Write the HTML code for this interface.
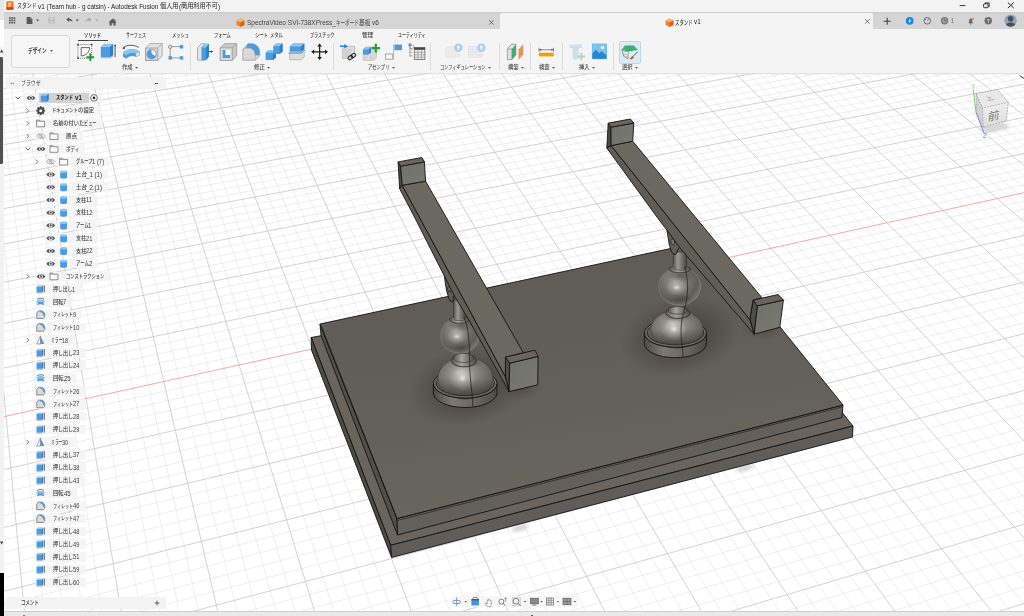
<!DOCTYPE html>
<html lang="ja"><head><meta charset="utf-8"><title>スタンド v1 - Autodesk Fusion</title>
<style>
html,body{margin:0;padding:0;background:#fff;}
body{width:1024px;height:616px;overflow:hidden;position:relative;font-family:"Liberation Sans","Noto Sans CJK JP",sans-serif;}
#app{position:absolute;left:0;top:0;width:1024px;height:616px;overflow:hidden;background:#fff;}
#vp{position:absolute;left:0;top:0;}
.t{position:absolute;white-space:nowrap;line-height:1;transform-origin:0 50%;display:block;}
.a{position:absolute;}
</style></head><body><div id="app">
<svg id="vp" width="1024" height="616" viewBox="0 0 1024 616">
<g shape-rendering="auto"><path d="M-371.6 -8.7L-998.0 1726.3M-360.6 -10.2L-957.3 1710.3M-338.6 -13.0L-877.3 1679.0M-327.6 -14.4L-838.1 1663.6M-316.7 -15.9L-799.4 1648.4M-305.9 -17.3L-761.1 1633.4M-284.3 -20.1L-686.1 1603.9M-273.6 -21.5L-649.2 1589.5M-262.9 -22.9L-612.8 1575.2M-252.2 -24.2L-576.9 1561.1M-231.0 -27.0L-506.3 1533.4M-220.5 -28.4L-471.6 1519.8M-210.0 -29.7L-437.4 1506.3M-199.6 -31.1L-403.5 1493.1M-178.8 -33.8L-337.0 1467.0M-168.5 -35.1L-304.3 1454.1M-158.2 -36.5L-272.0 1441.5M-147.9 -37.8L-240.1 1428.9M-127.5 -40.5L-177.3 1404.3M-117.4 -41.8L-146.4 1392.2M-107.3 -43.1L-115.9 1380.2M-97.2 -44.4L-85.7 1368.4M-77.2 -47.0L-26.3 1345.1M-67.3 -48.3L2.9 1333.6M-57.4 -49.6L31.7 1322.3M-47.5 -50.9L60.3 1311.1M-27.8 -53.4L116.5 1289.0M-18.1 -54.7L144.2 1278.2M-8.3 -56.0L171.5 1267.4M1.4 -57.2L198.6 1256.8M20.6 -59.7L251.9 1235.9M30.2 -61.0L278.1 1225.6M39.8 -62.2L304.1 1215.4M49.3 -63.5L329.8 1205.3M68.3 -65.9L380.4 1185.5M77.7 -67.2L405.3 1175.7M87.1 -68.4L430.0 1166.0M96.4 -69.6L454.4 1156.4M115.0 -72.0L502.5 1137.6M124.3 -73.2L526.2 1128.3M133.5 -74.4L549.7 1119.1M142.7 -75.6L573.0 1109.9M161.0 -78.0L618.8 1092.0M170.1 -79.2L641.3 1083.1M179.1 -80.4L663.7 1074.3M188.1 -81.5L685.8 1065.6M206.1 -83.9L729.5 1048.5M215.0 -85.0L751.0 1040.1M223.9 -86.2L772.3 1031.7M232.8 -87.3L793.5 1023.4M250.4 -89.6L835.1 1007.1M259.2 -90.8L855.7 999.0M268.0 -91.9L876.0 991.0M276.7 -93.0L896.2 983.1M294.0 -95.3L936.0 967.5M302.7 -96.4L955.6 959.8M311.3 -97.5L975.1 952.2M319.8 -98.7L994.3 944.6M336.9 -100.9L1032.4 929.7M345.3 -102.0L1051.2 922.3M353.8 -103.1L1069.8 915.0M362.2 -104.2L1088.2 907.8M379.0 -106.4L1124.6 893.5M387.3 -107.4L1142.6 886.4M395.6 -108.5L1160.4 879.4M403.9 -109.6L1178.1 872.5M420.4 -111.7L1213.0 858.8M428.6 -112.8L1230.2 852.1M436.8 -113.9L1247.3 845.4M444.9 -114.9L1264.2 838.7M461.1 -117.0L1297.7 825.6M469.2 -118.1L1314.2 819.1M477.2 -119.1L1330.6 812.7M485.2 -120.2L1346.8 806.3M501.1 -122.2L1378.9 793.7M509.1 -123.3L1394.8 787.5M517.0 -124.3L1410.5 781.3M524.8 -125.3L1426.1 775.2M540.5 -127.4L1457.0 763.1M548.3 -128.4L1472.2 757.1M556.1 -129.4L1487.3 751.2M563.8 -130.4L1502.3 745.3M579.3 -132.4L1532.0 733.7M586.9 -133.4L1546.6 727.9M594.6 -134.4L1561.2 722.2M602.2 -135.4L1575.6 716.6M617.4 -137.4L1604.1 705.4M624.9 -138.3L1618.2 699.8M632.5 -139.3L1632.2 694.3M640.0 -140.3L1646.1 688.9M654.9 -142.2L1673.5 678.1M662.3 -143.2L1687.1 672.8M669.7 -144.2L1700.6 667.5M677.1 -145.1L1713.9 662.3M691.8 -147.0L1740.4 651.9M699.1 -148.0L1753.5 646.8M706.4 -148.9L1766.4 641.7M713.7 -149.9L1779.3 636.6M728.1 -151.8L1804.8 626.6M735.3 -152.7L1817.4 621.7M742.5 -153.6L1830.0 616.7M749.7 -154.6L1842.4 611.9M763.9 -156.4L1867.0 602.2M771.0 -157.3L1879.2 597.4M778.1 -158.3L1891.2 592.7M785.1 -159.2L1903.2 588.0M799.1 -161.0L1927.0 578.7M806.1 -161.9L1938.7 574.1M813.1 -162.8L1950.4 569.5M820.0 -163.7L1962.0 564.9M833.8 -165.5L1984.9 555.9M840.7 -166.4L1996.3 551.5M847.5 -167.3L2007.5 547.1M854.3 -168.2L2018.7 542.7M867.9 -170.0L2040.9 534.0M874.7 -170.8L2051.9 529.7M881.4 -171.7L2062.8 525.4M888.2 -172.6L2073.6 521.2M901.6 -174.3L2095.0 512.7M908.2 -175.2L2105.6 508.6M914.9 -176.1L2116.2 504.4M921.5 -176.9L2126.7 500.3M934.7 -178.6L2147.4 492.2M-363.2 -10.7L927.5 -178.4M-364.7 -6.7L931.8 -176.0M-366.1 -2.6L936.2 -173.6M-367.5 1.5L940.6 -171.1M-370.5 9.9L949.4 -166.2M-371.9 14.1L953.9 -163.7M-373.5 18.4L958.5 -161.1M-375.0 22.8L963.0 -158.6M-378.1 31.6L972.3 -153.4M-379.6 36.1L977.0 -150.8M-381.2 40.6L981.7 -148.2M-382.9 45.2L986.5 -145.5M-386.1 54.6L996.2 -140.1M-387.8 59.4L1001.1 -137.4M-389.5 64.2L1006.0 -134.6M-391.2 69.0L1011.0 -131.9M-394.7 79.0L1021.1 -126.2M-396.5 84.0L1026.3 -123.4M-398.3 89.1L1031.4 -120.5M-400.1 94.3L1036.6 -117.6M-403.8 104.9L1047.2 -111.7M-405.7 110.3L1052.6 -108.7M-407.6 115.7L1058.0 -105.7M-409.5 121.2L1063.5 -102.6M-413.4 132.4L1074.6 -96.4M-415.5 138.2L1080.2 -93.3M-417.5 144.0L1085.9 -90.1M-419.5 149.9L1091.6 -86.9M-423.8 161.8L1103.3 -80.4M-425.9 168.0L1109.2 -77.1M-428.1 174.2L1115.2 -73.8M-430.3 180.4L1121.2 -70.5M-434.8 193.3L1133.4 -63.6M-437.1 199.8L1139.6 -60.2M-439.4 206.4L1145.9 -56.7M-441.8 213.2L1152.2 -53.2M-446.6 226.9L1165.1 -46.0M-449.0 233.9L1171.6 -42.4M-451.5 241.1L1178.2 -38.7M-454.1 248.3L1184.9 -35.0M-459.2 263.1L1198.4 -27.4M-461.9 270.6L1205.3 -23.6M-464.6 278.3L1212.3 -19.7M-467.3 286.1L1219.3 -15.8M-472.9 302.0L1233.6 -7.8M-475.8 310.1L1240.8 -3.8M-478.7 318.4L1248.1 0.3M-481.6 326.8L1255.6 4.4M-487.6 344.0L1270.6 12.8M-490.7 352.8L1278.3 17.1M-493.9 361.7L1286.1 21.4M-497.0 370.8L1293.9 25.8M-503.6 389.5L1309.8 34.7M-506.9 399.0L1317.9 39.2M-510.3 408.7L1326.2 43.8M-513.8 418.6L1334.5 48.4M-520.9 438.9L1351.3 57.8M-524.6 449.3L1359.9 62.6M-528.3 459.9L1368.6 67.4M-532.1 470.7L1377.4 72.3M-539.8 492.8L1395.4 82.3M-543.8 504.2L1404.5 87.4M-547.9 515.8L1413.7 92.6M-552.0 527.6L1423.1 97.8M-560.5 551.8L1442.1 108.4M-564.9 564.3L1451.8 113.8M-569.4 577.0L1461.7 119.3M-573.9 590.0L1471.6 124.8M-583.3 616.7L1491.9 136.1M-588.1 630.5L1502.2 141.9M-593.0 644.5L1512.7 147.7M-598.0 658.8L1523.3 153.6M-608.4 688.4L1545.0 165.7M-613.8 703.6L1556.0 171.9M-619.2 719.2L1567.2 178.1M-624.8 735.1L1578.6 184.4M-636.3 768.0L1601.7 197.3M-642.3 785.0L1613.5 203.9M-648.4 802.3L1625.5 210.6M-654.6 820.1L1637.7 217.4M-667.5 856.9L1662.5 231.2M-674.2 875.9L1675.2 238.3M-681.0 895.4L1688.1 245.4M-688.0 915.4L1701.1 252.7M-702.5 956.8L1727.8 267.6M-710.1 978.3L1741.4 275.2M-717.8 1000.3L1755.3 282.9M-725.7 1023.0L1769.3 290.7M-742.2 1070.0L1798.1 306.8M-750.8 1094.4L1812.8 315.0M-759.6 1119.6L1827.8 323.3M-768.7 1145.4L1842.9 331.7M-787.5 1199.2L1874.0 349.1M-797.4 1227.3L1889.9 357.9M-807.5 1256.2L1906.1 366.9M-818.0 1285.9L1922.6 376.1M-839.8 1348.1L1956.3 394.9M-851.2 1380.7L1973.5 404.5M-863.0 1414.3L1991.1 414.3M-875.1 1448.9L2009.0 424.3M-900.6 1521.7L2045.6 444.7M-914.0 1559.9L2064.4 455.2M-927.9 1599.4L2083.6 465.8M-942.2 1640.3L2103.1 476.7M-972.5 1726.5L2143.1 499.0" stroke="#e3e3e3" stroke-width="0.6" fill="none"/>
<path d="M-349.5 -11.6L-917.0 1694.6M-295.1 -18.7L-723.4 1618.6M-241.6 -25.6L-541.4 1547.2M-189.2 -32.4L-370.1 1479.9M-137.7 -39.1L-208.5 1416.5M-87.2 -45.7L-55.9 1356.7M-37.7 -52.2L88.6 1300.0M11.0 -58.5L225.4 1246.3M58.8 -64.7L355.2 1195.4M105.7 -70.8L478.6 1147.0M151.8 -76.8L596.0 1100.9M197.1 -82.7L707.8 1057.0M241.6 -88.5L814.4 1015.2M285.4 -94.2L916.2 975.3M328.4 -99.8L1013.5 937.1M370.6 -105.3L1106.5 900.6M412.2 -110.7L1195.6 865.6M453.0 -116.0L1281.0 832.1M493.2 -121.2L1363.0 800.0M532.7 -126.3L1441.6 769.1M571.6 -131.4L1517.2 739.5M609.8 -136.4L1589.9 710.9M647.4 -141.3L1659.8 683.5M684.5 -146.1L1727.2 657.1M720.9 -150.8L1792.1 631.6M756.8 -155.5L1854.7 607.0M792.1 -160.1L1915.2 583.3M826.9 -164.6L1973.5 560.4M861.1 -169.1L2029.9 538.3M894.9 -173.5L2084.3 516.9M928.1 -177.8L2137.1 496.3M-369.0 5.7L945.0 -168.7M-376.5 27.2L967.6 -156.0M-384.5 49.9L991.3 -142.8M-392.9 74.0L1016.0 -129.1M-401.9 99.6L1041.9 -114.6M-411.5 126.8L1069.0 -99.5M-421.6 155.8L1097.4 -83.7M-432.5 186.8L1127.3 -67.1M-444.1 220.0L1158.6 -49.6M-456.6 255.6L1191.6 -31.2M-470.1 294.0L1226.4 -11.8M-484.6 335.3L1263.1 8.6M-500.3 380.1L1301.8 30.2M-517.3 428.7L1342.8 53.1M-535.9 481.6L1386.3 77.3M-578.5 603.2L1481.7 130.4M-603.2 673.4L1534.1 159.6M-630.5 751.4L1590.1 190.8M-661.0 838.3L1650.0 224.2M-695.2 935.8L1714.4 260.1M-733.9 1046.2L1783.6 298.7M-778.0 1171.9L1858.4 340.3M-828.7 1316.5L1939.3 385.4M-887.7 1484.7L2027.1 434.4M-957.1 1682.6L2122.9 487.7" stroke="#c0c0c0" stroke-width="0.7" fill="none"/>
<path d="M-556.2 539.6L1432.5 103.0" stroke="#f08f88" stroke-width="0.75" fill="none"/>
</g>
<defs>
<radialGradient id="gBall" cx="0.42" cy="0.38" r="0.62" fx="0.40" fy="0.32">
<stop offset="0" stop-color="#a6a5a0"/><stop offset="0.25" stop-color="#87867f"/><stop offset="0.55" stop-color="#706f69"/><stop offset="0.82" stop-color="#5d5c57"/><stop offset="1" stop-color="#77766f"/></radialGradient>
<radialGradient id="gBall2" cx="0.45" cy="0.42" r="0.62" fx="0.42" fy="0.36">
<stop offset="0" stop-color="#bdbcb7"/><stop offset="0.25" stop-color="#96958f"/><stop offset="0.55" stop-color="#7c7b75"/><stop offset="0.85" stop-color="#64635d"/><stop offset="1" stop-color="#52514b"/></radialGradient>
<radialGradient id="gHi" cx="0.5" cy="0.5" r="0.5"><stop offset="0" stop-color="#ffffff" stop-opacity="0.75"/><stop offset="0.35" stop-color="#f2f2ee" stop-opacity="0.3"/><stop offset="1" stop-color="#e0e0dc" stop-opacity="0"/></radialGradient>
<radialGradient id="gDk" cx="0.5" cy="0.5" r="0.5"><stop offset="0" stop-color="#3e3d39" stop-opacity="0.55"/><stop offset="1" stop-color="#3e3d39" stop-opacity="0"/></radialGradient>
<linearGradient id="gDome" x1="0" x2="0" y1="0" y2="1"><stop offset="0" stop-color="#2c2b28" stop-opacity="0"/><stop offset="0.5" stop-color="#2c2b28" stop-opacity="0"/><stop offset="0.8" stop-color="#2c2b28" stop-opacity="0.35"/><stop offset="1" stop-color="#2c2b28" stop-opacity="0.7"/></linearGradient>
<linearGradient id="gPost" x1="0" x2="1" y1="0" y2="0"><stop offset="0" stop-color="#5a5954"/><stop offset="0.35" stop-color="#9a9994"/><stop offset="0.6" stop-color="#77766f"/><stop offset="1" stop-color="#45443f"/></linearGradient>
<linearGradient id="gNeck" x1="0" x2="1" y1="0" y2="0"><stop offset="0" stop-color="#5a5954"/><stop offset="0.4" stop-color="#a3a29c"/><stop offset="0.7" stop-color="#7a7972"/><stop offset="1" stop-color="#4a4944"/></linearGradient>
<linearGradient id="gDiskSide" x1="0" x2="1" y1="0" y2="0"><stop offset="0" stop-color="#4c4b45"/><stop offset="0.3" stop-color="#7b7a72"/><stop offset="0.7" stop-color="#65645d"/><stop offset="1" stop-color="#4a4943"/></linearGradient>
<linearGradient id="gTop" gradientUnits="userSpaceOnUse" x1="560" y1="260" x2="600" y2="520"><stop offset="0" stop-color="#5f5c55"/><stop offset="0.5" stop-color="#63605a"/><stop offset="1" stop-color="#6a675e"/></linearGradient>
<radialGradient id="gAO" cx="0.5" cy="0.5" r="0.5"><stop offset="0" stop-color="#2e2c28" stop-opacity="0.75"/><stop offset="0.45" stop-color="#35332f" stop-opacity="0.45"/><stop offset="1" stop-color="#3a3834" stop-opacity="0"/></radialGradient>
<linearGradient id="gBlk" x1="0" x2="1" y1="0" y2="1"><stop offset="0" stop-color="#6f706a"/><stop offset="1" stop-color="#7a7a74"/></linearGradient>
<filter id="fBlur" x="-50%" y="-50%" width="200%" height="200%"><feGaussianBlur stdDeviation="2"/></filter>
<clipPath id="cTop"><polygon points="320,324 710,240 843,405 397,518.5"/></clipPath>
</defs>
<ellipse cx="520" cy="528" rx="9" ry="2.2" fill="#9a9a9a" opacity="0.6" filter="url(#fBlur)" transform="rotate(-14 520 528)"/>
<ellipse cx="745" cy="468" rx="10" ry="2.2" fill="#9a9a9a" opacity="0.6" filter="url(#fBlur)" transform="rotate(-14 745 468)"/>
<polygon points="311.2,337.5 390.7,545.3 853.0,426.0 720.0,262.0" fill="#69655c" stroke="#141412" stroke-width="0.9" stroke-linejoin="round" />
<polygon points="311.2,337.5 390.7,545.3 391.7,557.4 311.5,350.0" fill="#4d4b44" stroke="#141412" stroke-width="0.9" stroke-linejoin="round" />
<polygon points="390.7,545.3 853.0,426.0 852.5,437.0 391.7,557.4" fill="#5f5d57" stroke="#141412" stroke-width="0.9" stroke-linejoin="round" />
<polygon points="320.0,324.0 397.0,518.5 397.5,535.0 321.0,335.5" fill="#514f48" stroke="#141412" stroke-width="0.9" stroke-linejoin="round" />
<polygon points="397.0,518.5 843.0,405.0 842.0,417.5 397.5,535.0" fill="#62605a" stroke="#141412" stroke-width="0.9" stroke-linejoin="round" />
<polygon points="320.0,324.0 710.0,240.0 843.0,405.0 397.0,518.5" fill="url(#gTop)" stroke="#141412" stroke-width="0.9" stroke-linejoin="round" />
<path d="M321.2 325.5L397.6 520.4L842.6 406.8" fill="none" stroke="#1a1a18" stroke-width="0.6"/>
<g clip-path="url(#cTop)"><ellipse cx="468" cy="386" rx="62" ry="40" fill="url(#gAO)" transform="rotate(-12 468 386)"/><ellipse cx="680" cy="336" rx="62" ry="40" fill="url(#gAO)" transform="rotate(-12 680 336)"/><ellipse cx="520" cy="385" rx="22" ry="16" fill="url(#gAO)" opacity="0.6"/><ellipse cx="762" cy="327" rx="22" ry="14" fill="url(#gAO)" opacity="0.5"/></g>
<path d="M433.4 383.5 v9.4 a31.8 14.6 0 0 0 63.6 0 v-9.4 z" fill="url(#gDiskSide)" stroke="#141412" stroke-width="0.9" stroke-linejoin="round"/>
<ellipse cx="465.2" cy="383.5" rx="31.8" ry="14.6" fill="#74726a" stroke="#141412" stroke-width="0.9" stroke-linejoin="round"/>
<ellipse cx="465.2" cy="382.9" rx="29.2" ry="12.8" fill="#5d5b55" stroke="#1c1c1a" stroke-width="0.7"/>
<ellipse cx="465.5" cy="378.1" rx="27.5" ry="21.1" fill="url(#gBall2)" stroke="#3a3a37" stroke-width="0.5"/>
<ellipse cx="465.5" cy="378.1" rx="27.5" ry="21.1" fill="url(#gDome)"/>
<ellipse cx="466.5" cy="363.0" rx="17.1" ry="5.0" fill="url(#gDk)"/>
<ellipse cx="462.5" cy="378.1" rx="13.8" ry="12.7" fill="url(#gHi)"/>
<path d="M436.0 382.9 A29.2 12.8 0 0 0 494.4 382.9 L497.0 383.5 A31.8 14.6 0 0 1 433.4 383.5 Z" fill="#6a6861"/>
<path d="M436.0 382.9 A29.2 12.8 0 0 0 494.4 382.9" fill="none" stroke="#1c1c1a" stroke-width="0.7"/>
<path d="M433.4 383.5 A31.8 14.6 0 0 0 497.0 383.5" fill="none" stroke="#141412" stroke-width="0.9" stroke-linejoin="round"/>
<rect x="453.8" y="300.0" width="11.5" height="19.0" fill="url(#gPost)" stroke="#222" stroke-width="0.5"/>
<ellipse cx="460.0" cy="335.5" rx="19.3" ry="18.0" fill="url(#gBall)" stroke="#86857f" stroke-width="0.6"/>
<ellipse cx="461.0" cy="325.6" rx="13.5" ry="5.8" fill="url(#gDk)"/>
<ellipse cx="461.0" cy="348.1" rx="13.5" ry="5.4" fill="url(#gDk)"/>
<ellipse cx="457.0" cy="336.5" rx="10.6" ry="7.6" fill="url(#gHi)"/>
<ellipse cx="459.5" cy="319.8" rx="9.9" ry="3.4" fill="url(#gNeck)" stroke="#222" stroke-width="0.6"/>
<rect x="453.8" y="315.0" width="11.5" height="4.4" fill="url(#gPost)"/>
<path d="M453.8 319.2 a5.8 1.6 0 0 0 11.5 0" fill="none" stroke="#222" stroke-width="0.5"/>
<ellipse cx="464.0" cy="360.6" rx="12.6" ry="6.2" fill="url(#gNeck)" stroke="#222" stroke-width="0.7"/>
<ellipse cx="463.7" cy="358.0" rx="10.2" ry="4.6" fill="url(#gNeck)" stroke="#222" stroke-width="0.5"/>
<path d="M464.0 317.0 C469.0 329.5 469.5 343.5 469.5 360.6 S473.2 398.1 472.7 406.7" fill="none" stroke="#1c1c1a" stroke-width="0.7"/>
<path d="M644.4 333.2 v10.5 a31.0 14.0 0 0 0 62.0 0 v-10.5 z" fill="url(#gDiskSide)" stroke="#141412" stroke-width="0.9" stroke-linejoin="round"/>
<ellipse cx="675.4" cy="333.2" rx="31.0" ry="14.0" fill="#74726a" stroke="#141412" stroke-width="0.9" stroke-linejoin="round"/>
<ellipse cx="675.4" cy="332.6" rx="28.4" ry="12.2" fill="#5d5b55" stroke="#1c1c1a" stroke-width="0.7"/>
<ellipse cx="677.0" cy="329.3" rx="26.2" ry="18.9" fill="url(#gBall2)" stroke="#3a3a37" stroke-width="0.5"/>
<ellipse cx="677.0" cy="329.3" rx="26.2" ry="18.9" fill="url(#gDome)"/>
<ellipse cx="678.0" cy="316.4" rx="16.2" ry="5.0" fill="url(#gDk)"/>
<ellipse cx="674.0" cy="329.3" rx="13.1" ry="11.4" fill="url(#gHi)"/>
<path d="M647.0 332.6 A28.4 12.2 0 0 0 703.8 332.6 L706.4 333.2 A31.0 14.0 0 0 1 644.4 333.2 Z" fill="#6a6861"/>
<path d="M647.0 332.6 A28.4 12.2 0 0 0 703.8 332.6" fill="none" stroke="#1c1c1a" stroke-width="0.7"/>
<path d="M644.4 333.2 A31.0 14.0 0 0 0 706.4 333.2" fill="none" stroke="#141412" stroke-width="0.9" stroke-linejoin="round"/>
<rect x="673.2" y="252.0" width="13.5" height="16.5" fill="url(#gPost)" stroke="#222" stroke-width="0.5"/>
<ellipse cx="679.6" cy="286.4" rx="21.0" ry="19.0" fill="url(#gBall)" stroke="#86857f" stroke-width="0.6"/>
<ellipse cx="680.6" cy="275.9" rx="14.7" ry="6.1" fill="url(#gDk)"/>
<ellipse cx="680.6" cy="299.7" rx="14.7" ry="5.7" fill="url(#gDk)"/>
<ellipse cx="676.6" cy="287.4" rx="11.6" ry="8.0" fill="url(#gHi)"/>
<ellipse cx="680.0" cy="269.3" rx="10.9" ry="3.4" fill="url(#gNeck)" stroke="#222" stroke-width="0.6"/>
<rect x="673.2" y="264.5" width="13.5" height="4.4" fill="url(#gPost)"/>
<path d="M673.2 268.7 a6.8 1.6 0 0 0 13.5 0" fill="none" stroke="#222" stroke-width="0.5"/>
<ellipse cx="678.0" cy="313.0" rx="12.2" ry="5.4" fill="url(#gNeck)" stroke="#222" stroke-width="0.7"/>
<ellipse cx="677.7" cy="310.4" rx="9.8" ry="3.8" fill="url(#gNeck)" stroke="#222" stroke-width="0.5"/>
<path d="M684.5 266.5 C688.6 280.4 689.1 294.4 683.5 313.0 S683.4 347.2 682.9 356.9" fill="none" stroke="#1c1c1a" stroke-width="0.7"/>
<polygon points="505.4,357.0 509.7,363.2 509.1,391.6 505.4,376.8" fill="#4e4c46" stroke="#141412" stroke-width="0.9" stroke-linejoin="round" />
<polygon points="509.7,363.2 538.1,356.4 537.7,384.8 509.1,391.6" fill="url(#gBlk)" stroke="#141412" stroke-width="0.9" stroke-linejoin="round" />
<polygon points="505.4,357.0 535.0,350.2 538.1,356.4 509.7,363.2" fill="#67655d" stroke="#141412" stroke-width="0.9" stroke-linejoin="round" />
<path d="M444.4 276.2 L445.6 285 Q446.6 292.5 449 298.5 Q451 302.6 452.6 302 Q454 300.5 453.1 296.4 L454.6 295.4 L452 282 Z" fill="#605e57" stroke="#141412" stroke-width="0.9" stroke-linejoin="round"/>
<ellipse cx="449.4" cy="289.4" rx="1.7" ry="2.8" fill="#6d6b64" stroke="#1a1a18" stroke-width="0.7" transform="rotate(-14 449.4 289.4)"/>
<polygon points="399.6,188.6 415.0,218.0 436.2,260.0 444.4,276.0 454.4,296.0 468.9,320.0 509.1,391.6 505.4,376.8 402.2,185.3" fill="#5f5d56" stroke="#141412" stroke-width="0.9" stroke-linejoin="round" />
<polygon points="402.2,185.3 425.6,181.2 523.3,352.7 505.4,357.0 505.4,376.8" fill="#6b685f" stroke="#141412" stroke-width="0.9" stroke-linejoin="round" />
<polygon points="398.1,161.9 400.6,166.2 402.2,185.3 399.6,188.6" fill="#4a4843" stroke="#141412" stroke-width="0.9" stroke-linejoin="round" />
<polygon points="400.6,166.2 424.4,161.9 425.6,181.2 402.2,185.3" fill="url(#gBlk)" stroke="#141412" stroke-width="0.9" stroke-linejoin="round" />
<polygon points="398.1,161.9 421.9,157.5 424.4,161.9 400.6,166.2" fill="#68665e" stroke="#141412" stroke-width="0.9" stroke-linejoin="round" />
<polygon points="753.0,300.1 757.5,305.8 754.2,334.2 749.8,319.6" fill="#4e4c46" stroke="#141412" stroke-width="0.9" stroke-linejoin="round" />
<polygon points="757.5,305.8 783.4,300.1 779.8,327.3 754.2,334.2" fill="url(#gBlk)" stroke="#141412" stroke-width="0.9" stroke-linejoin="round" />
<polygon points="753.0,300.1 778.2,294.5 783.4,300.1 757.5,305.8" fill="#67655d" stroke="#141412" stroke-width="0.9" stroke-linejoin="round" />
<path d="M666.9 230 L668.1 237.5 Q669 246 671.6 252 Q674 255.4 675.8 254.4 Q677.8 252.6 677.4 249.8 L680 247.3 L674 236 Z" fill="#605e57" stroke="#141412" stroke-width="0.9" stroke-linejoin="round"/>
<ellipse cx="672.7" cy="241.8" rx="1.9" ry="3.2" fill="#77756e" stroke="#1a1a18" stroke-width="0.7" transform="rotate(-12 672.7 241.8)"/>
<polygon points="606.8,148.0 656.2,216.0 666.9,230.0 679.3,247.1 716.1,290.0 754.2,334.2 749.8,319.6 611.1,145.6" fill="#5f5d56" stroke="#141412" stroke-width="0.9" stroke-linejoin="round" />
<polygon points="611.1,145.6 632.7,141.2 761.9,297.7 753.0,300.1 749.8,319.6" fill="#6b685f" stroke="#141412" stroke-width="0.9" stroke-linejoin="round" />
<polygon points="608.2,123.1 611.0,127.2 611.1,145.6 606.8,148.0" fill="#4a4843" stroke="#141412" stroke-width="0.9" stroke-linejoin="round" />
<polygon points="611.0,127.2 633.8,123.1 632.7,141.2 611.1,145.6" fill="url(#gBlk)" stroke="#141412" stroke-width="0.9" stroke-linejoin="round" />
<polygon points="608.2,123.1 630.4,119.0 633.8,123.1 611.0,127.2" fill="#68665e" stroke="#141412" stroke-width="0.9" stroke-linejoin="round" />
</svg>
<div id="titlebar" class="a" style="left:0;top:0;width:1024px;height:12.5px;background:#f3f3f3"></div>
<svg class="a" style="left:6.00px;top:1.20px;" width="8" height="9.2" viewBox="0 0 8 9.2"><rect x="0.3" y="0.2" width="7.2" height="8.6" rx="1.2" fill="#f2761c"/><rect x="0.3" y="6.3" width="7.2" height="2.5" rx="0.8" fill="#c24a12"/><path d="M2.6 1.8h2.8v0.9H3.6v1h1.5v0.9H3.6v1.5H2.6z" fill="#fff"/></svg>
<span class="t" id="t0" style="left:17.00px;top:2.90px;font-size:6.80px;color:#222;transform:scaleX(0.7239);">スタンド</span><span class="t" id="t1" style="left:38.44px;top:2.56px;font-size:7.48px;color:#222;transform:scaleX(0.8469);">v1 (Team hub - g catsin) - Autodesk Fusion</span><span class="t" id="t2" style="left:160.44px;top:2.90px;font-size:6.80px;color:#222;transform:scaleX(0.9049);">個人用</span><span class="t" id="t3" style="left:178.89px;top:2.56px;font-size:7.48px;color:#222;transform:scaleX(0.8425);">(</span><span class="t" id="t4" style="left:180.99px;top:2.90px;font-size:6.80px;color:#222;transform:scaleX(0.9049);">商用利用不可</span><span class="t" id="t5" style="left:217.89px;top:2.56px;font-size:7.48px;color:#222;transform:scaleX(0.8425);">)</span>
<svg class="a" style="left:955.00px;top:0.00px;" width="69" height="12.5" viewBox="0 0 69 12.5"><path d="M4.7 5.6h5.7" stroke="#222" stroke-width="0.9"/><rect x="28.6" y="3.8" width="4.4" height="3.9" rx="0.8" fill="none" stroke="#222" stroke-width="0.9"/><path d="M30 3.8v-0.9h4.2v3.8h-1" fill="none" stroke="#222" stroke-width="0.9"/><path d="M52.9 2.5l5.8 5.6M58.7 2.5l-5.8 5.6" stroke="#222" stroke-width="0.95"/></svg>
<div id="tabbar" class="a" style="left:4px;top:12.5px;width:1020px;height:16.5px;background:#d5d5d5"></div>
<div class="a" style="left:4.00px;top:12.00px;width:1020.00px;height:1.60px;background:#d0d0d0;"></div>
<div id="tab-active" class="a" style="left:500px;top:13.3px;width:373px;height:15.8px;background:#f4f4f4;border-radius:2px 2px 0 0"></div>
<svg class="a" style="left:0.00px;top:0.00px;" width="130" height="29" viewBox="0 0 130 29"><rect x="9.0" y="17.2" width="1.7" height="1.7" fill="#5a5a5a"/><rect x="11.3" y="17.2" width="1.7" height="1.7" fill="#5a5a5a"/><rect x="13.6" y="17.2" width="1.7" height="1.7" fill="#5a5a5a"/><rect x="9.0" y="19.5" width="1.7" height="1.7" fill="#5a5a5a"/><rect x="11.3" y="19.5" width="1.7" height="1.7" fill="#5a5a5a"/><rect x="13.6" y="19.5" width="1.7" height="1.7" fill="#5a5a5a"/><rect x="9.0" y="21.8" width="1.7" height="1.7" fill="#5a5a5a"/><rect x="11.3" y="21.8" width="1.7" height="1.7" fill="#5a5a5a"/><rect x="13.6" y="21.8" width="1.7" height="1.7" fill="#5a5a5a"/><path d="M26.6 17h3.6l2.2 2.2v4.9h-5.8z" fill="#5a5a5a"/><path d="M30.2 17v2.2h2.2" fill="#8a8a8a"/><path d="M36 19.4h3.2l-1.6 2z" fill="#5a5a5a"/><rect x="48.4" y="17.4" width="6.4" height="6.2" fill="#b9b9b9"/><rect x="49.7" y="17.4" width="3.8" height="2.2" fill="#d5d5d5"/><rect x="49.4" y="21" width="4.4" height="2.6" fill="#cfcfcf"/><path d="M66.2 19.6l3-2.3v1.5c2 0 3.3 1.3 3.3 3.6c-0.7-1.3-1.7-1.8-3.3-1.8v1.4z" fill="#555"/><path d="M75.6 19.4h3.2l-1.6 2z" fill="#555"/><path d="M91.6 19.6l-3-2.3v1.5c-2 0-3.3 1.3-3.3 3.6c0.7-1.3 1.7-1.8 3.3-1.8v1.4z" fill="#a9a9a9"/><path d="M95.2 19.4h3.2l-1.6 2z" fill="#a9a9a9"/><path d="M108.6 22.2l4-3.6l4 3.6h-1v3.3h-2.2v-2.2h-1.6v2.2h-2.2v-3.3z" fill="#5a5a5a"/><rect x="114.4" y="19" width="0.9" height="1.6" fill="#5a5a5a"/></svg>
<svg class="a" style="left:236.00px;top:17.80px;" width="9" height="9.6" viewBox="0 0 9 9.6"><path d="M4.5 0.6L8.4 2.6V7L4.5 9L0.6 7V2.6Z" fill="#f0832a"/><path d="M4.5 0.6L8.4 2.6L4.5 4.6L0.6 2.6Z" fill="#fbb36b"/><path d="M4.5 4.6V9L8.4 7V2.6Z" fill="#d9641a"/></svg>
<span class="t" id="t6" style="left:246.90px;top:18.75px;font-size:7.70px;color:#444;transform:scaleX(0.8470);">SpectraVideo SVI-738XPress_</span><span class="t" id="t7" style="left:335.83px;top:19.10px;font-size:7.00px;color:#444;transform:scaleX(0.6512);">キーボード</span><span class="t" id="t8" style="left:358.62px;top:19.10px;font-size:7.00px;color:#444;transform:scaleX(0.8140);">基板</span><span class="t" id="t9" style="left:371.82px;top:18.75px;font-size:7.70px;color:#444;transform:scaleX(0.8464);">v6</span>
<svg class="a" style="left:488.00px;top:19.00px;" width="7" height="7" viewBox="0 0 7 7"><path d="M1.2 1.2l4.4 4.4M5.6 1.2l-4.4 4.4" stroke="#555" stroke-width="0.8"/></svg>
<svg class="a" style="left:664.50px;top:17.60px;" width="9" height="9.6" viewBox="0 0 9 9.6"><path d="M4.5 0.6L8.4 2.6V7L4.5 9L0.6 7V2.6Z" fill="#f0832a"/><path d="M4.5 0.6L8.4 2.6L4.5 4.6L0.6 2.6Z" fill="#fbb36b"/><path d="M4.5 4.6V9L8.4 7V2.6Z" fill="#d9641a"/></svg>
<span class="t" id="t10" style="left:674.60px;top:18.60px;font-size:7.00px;color:#222;transform:scaleX(0.6289);">スタンド</span><span class="t" id="t11" style="left:693.96px;top:18.25px;font-size:7.70px;color:#222;transform:scaleX(0.8175);">v1</span>
<svg class="a" style="left:863.80px;top:18.20px;" width="7" height="7" viewBox="0 0 7 7"><path d="M1.2 1.2l4.4 4.4M5.6 1.2l-4.4 4.4" stroke="#555" stroke-width="0.8"/></svg>
<svg class="a" style="left:860.00px;top:0.00px;" width="164" height="29" viewBox="0 0 164 29"><path d="M27.2 17.8v7M23.7 21.3h7" stroke="#444" stroke-width="1.1"/><circle cx="49.7" cy="20.8" r="3.9" fill="#1a86e8"/><path d="M50.4 18.3l-2 2.9h1.3l-0.5 2.2l2-2.9h-1.3z" fill="#fff"/><circle cx="67.3" cy="20.8" r="3.3" fill="none" stroke="#555" stroke-width="0.8"/><path d="M67.3 20.8l1.8-2.2M65 19.2l1 0.6" stroke="#555" stroke-width="0.7"/><circle cx="84.6" cy="20.8" r="3.7" fill="#7d7d7d"/><circle cx="84.6" cy="20.8" r="2.2" fill="#9c9c9c"/><path d="M84.6 19.3v1.6h1.3" stroke="#555" stroke-width="0.6" fill="none"/><path d="M108.3 23.2c0.8-0.6 0.9-1.4 0.9-2.6c0-1.3 0.6-2.1 1.5-2.1s1.5 0.8 1.5 2.1c0 1.2 0.1 2 0.9 2.6z" fill="#666"/><circle cx="110.7" cy="24" r="0.7" fill="#666"/><circle cx="112.7" cy="18.9" r="1.1" fill="#f07a2a"/><circle cx="128.2" cy="20.8" r="3.7" fill="#6e6e6e"/><circle cx="150.6" cy="20.6" r="6.2" fill="#93a3b8"/><clipPath id="cAv"><circle cx="150.6" cy="20.6" r="6.2"/></clipPath><g clip-path="url(#cAv)"><circle cx="150.6" cy="18.8" r="2.8" fill="#46505f"/><ellipse cx="150.6" cy="27" rx="5.4" ry="4.6" fill="#46505f"/></g></svg>
<span class="t" id="t12" style="left:950.60px;top:17.60px;font-size:6.60px;color:#555;transform:scaleX(0.7081);">1</span>
<span class="t" id="t13" style="left:986.90px;top:17.82px;font-size:6.16px;color:#eee;font-weight:700;transform:scaleX(0.6905);">?</span>
<div id="browser-header" class="a" style="left:6px;top:76.5px;width:159.5px;height:12.4px;background:rgba(243,243,243,0.96)"></div>
<span class="t" id="t14" style="left:21.00px;top:80.55px;font-size:5.90px;color:#444;transform:scaleX(0.8318);">ブラウザ</span>
<div class="a" style="left:155.20px;top:83.00px;width:3.00px;height:0.80px;background:#555;"></div>
<div class="a" style="left:24.00px;top:92.90px;width:78.00px;height:10.00px;background:rgba(244,244,244,0.88);"></div>
<div class="a" style="left:39.00px;top:92.80px;width:49.50px;height:10.20px;background:#d2d2d2;"></div>
<span class="t" id="t15" style="left:56.00px;top:95.40px;font-size:5.80px;color:#222;font-weight:700;transform:scaleX(0.7344);">スタンド</span><span class="t" id="t16" style="left:74.73px;top:95.11px;font-size:6.38px;color:#222;font-weight:700;transform:scaleX(0.9542);">v1</span>
<div class="a" style="left:35.00px;top:105.95px;width:66.00px;height:9.40px;background:rgba(244,244,244,0.88);"></div>
<span class="t" id="t17" style="left:52.00px;top:108.30px;font-size:5.70px;color:#3c3c3c;font-weight:500;transform:scaleX(0.7574);">ドキュメント</span><span class="t" id="t18" style="left:77.85px;top:108.30px;font-size:5.70px;color:#3c3c3c;font-weight:500;transform:scaleX(0.9467);">の設定</span>
<div class="a" style="left:35.00px;top:118.70px;width:68.00px;height:9.40px;background:rgba(244,244,244,0.88);"></div>
<span class="t" id="t19" style="left:52.50px;top:121.05px;font-size:5.70px;color:#3c3c3c;font-weight:500;transform:scaleX(0.9105);">名前の付いた</span><span class="t" id="t20" style="left:83.57px;top:121.05px;font-size:5.70px;color:#3c3c3c;font-weight:500;transform:scaleX(0.7284);">ビュー</span>
<div class="a" style="left:35.00px;top:131.45px;width:47.50px;height:9.40px;background:rgba(244,244,244,0.88);"></div>
<span class="t" id="t21" style="left:66.00px;top:133.80px;font-size:5.70px;color:#3c3c3c;font-weight:500;transform:scaleX(0.9670);">原点</span>
<div class="a" style="left:35.00px;top:144.20px;width:49.80px;height:9.40px;background:rgba(244,244,244,0.88);"></div>
<span class="t" id="t22" style="left:66.00px;top:146.55px;font-size:5.70px;color:#3c3c3c;font-weight:500;transform:scaleX(0.7978);">ボディ</span>
<div class="a" style="left:45.00px;top:156.95px;width:64.80px;height:9.40px;background:rgba(244,244,244,0.88);"></div>
<span class="t" id="t23" style="left:75.70px;top:159.30px;font-size:5.70px;color:#3c3c3c;font-weight:500;transform:scaleX(0.7355);">グループ</span><span class="t" id="t24" style="left:92.19px;top:159.02px;font-size:6.27px;color:#3c3c3c;font-weight:500;transform:scaleX(0.9394);">1 (7)</span>
<div class="a" style="left:45.00px;top:169.70px;width:63.00px;height:9.40px;background:rgba(244,244,244,0.88);"></div>
<span class="t" id="t25" style="left:75.70px;top:172.05px;font-size:5.70px;color:#3c3c3c;font-weight:500;transform:scaleX(0.9452);">土台</span><span class="t" id="t26" style="left:86.45px;top:171.77px;font-size:6.27px;color:#3c3c3c;font-weight:500;transform:scaleX(0.9800);">_1 (1)</span>
<div class="a" style="left:45.00px;top:182.45px;width:63.00px;height:9.40px;background:rgba(244,244,244,0.88);"></div>
<span class="t" id="t27" style="left:75.70px;top:184.80px;font-size:5.70px;color:#3c3c3c;font-weight:500;transform:scaleX(0.9452);">土台</span><span class="t" id="t28" style="left:86.45px;top:184.52px;font-size:6.27px;color:#3c3c3c;font-weight:500;transform:scaleX(0.9800);">_2 (1)</span>
<div class="a" style="left:45.00px;top:195.20px;width:52.50px;height:9.40px;background:rgba(244,244,244,0.88);"></div>
<span class="t" id="t29" style="left:75.70px;top:197.55px;font-size:5.70px;color:#3c3c3c;font-weight:500;transform:scaleX(0.8995);">支柱</span><span class="t" id="t30" style="left:85.93px;top:197.27px;font-size:6.27px;color:#3c3c3c;font-weight:500;transform:scaleX(0.9314);">11</span>
<div class="a" style="left:45.00px;top:207.95px;width:52.80px;height:9.40px;background:rgba(244,244,244,0.88);"></div>
<span class="t" id="t31" style="left:75.70px;top:210.30px;font-size:5.70px;color:#3c3c3c;font-weight:500;transform:scaleX(0.8923);">支柱</span><span class="t" id="t32" style="left:85.85px;top:210.02px;font-size:6.27px;color:#3c3c3c;font-weight:500;transform:scaleX(0.9236);">12</span>
<div class="a" style="left:45.00px;top:220.70px;width:52.30px;height:9.40px;background:rgba(244,244,244,0.88);"></div>
<span class="t" id="t33" style="left:75.70px;top:223.05px;font-size:5.70px;color:#3c3c3c;font-weight:500;transform:scaleX(0.7686);">アーム</span><span class="t" id="t34" style="left:88.43px;top:222.77px;font-size:6.27px;color:#3c3c3c;font-weight:500;transform:scaleX(0.9631);">1</span>
<div class="a" style="left:45.00px;top:233.45px;width:52.80px;height:9.40px;background:rgba(244,244,244,0.88);"></div>
<span class="t" id="t35" style="left:75.70px;top:235.80px;font-size:5.70px;color:#3c3c3c;font-weight:500;transform:scaleX(0.8923);">支柱</span><span class="t" id="t36" style="left:85.85px;top:235.52px;font-size:6.27px;color:#3c3c3c;font-weight:500;transform:scaleX(0.9236);">21</span>
<div class="a" style="left:45.00px;top:246.20px;width:53.10px;height:9.40px;background:rgba(244,244,244,0.88);"></div>
<span class="t" id="t37" style="left:75.70px;top:248.55px;font-size:5.70px;color:#3c3c3c;font-weight:500;transform:scaleX(0.9084);">支柱</span><span class="t" id="t38" style="left:86.03px;top:248.27px;font-size:6.27px;color:#3c3c3c;font-weight:500;transform:scaleX(0.9402);">22</span>
<div class="a" style="left:45.00px;top:258.95px;width:52.60px;height:9.40px;background:rgba(244,244,244,0.88);"></div>
<span class="t" id="t39" style="left:75.70px;top:261.30px;font-size:5.70px;color:#3c3c3c;font-weight:500;transform:scaleX(0.7829);">アーム</span><span class="t" id="t40" style="left:88.67px;top:261.01px;font-size:6.27px;color:#3c3c3c;font-weight:500;transform:scaleX(0.9810);">2</span>
<div class="a" style="left:35.00px;top:271.70px;width:74.80px;height:9.40px;background:rgba(244,244,244,0.88);"></div>
<span class="t" id="t41" style="left:66.00px;top:274.05px;font-size:5.70px;color:#3c3c3c;font-weight:500;transform:scaleX(0.7498);">コンストラクション</span>
<div class="a" style="left:35.20px;top:284.45px;width:46.70px;height:9.40px;background:rgba(244,244,244,0.88);"></div>
<span class="t" id="t42" style="left:52.90px;top:286.80px;font-size:5.70px;color:#3c3c3c;font-weight:500;transform:scaleX(0.8534);">押し出し</span><span class="t" id="t43" style="left:72.32px;top:286.51px;font-size:6.27px;color:#3c3c3c;font-weight:500;transform:scaleX(0.8814);">1</span>
<div class="a" style="left:35.20px;top:297.20px;width:38.10px;height:9.40px;background:rgba(244,244,244,0.88);"></div>
<span class="t" id="t44" style="left:52.90px;top:299.55px;font-size:5.70px;color:#3c3c3c;font-weight:500;transform:scaleX(0.9273);">回転</span><span class="t" id="t45" style="left:63.45px;top:299.26px;font-size:6.27px;color:#3c3c3c;font-weight:500;transform:scaleX(0.9577);">7</span>
<div class="a" style="left:35.20px;top:309.95px;width:47.20px;height:9.40px;background:rgba(244,244,244,0.88);"></div>
<span class="t" id="t46" style="left:52.90px;top:312.30px;font-size:5.70px;color:#3c3c3c;font-weight:500;transform:scaleX(0.7006);">フィレット</span><span class="t" id="t47" style="left:72.75px;top:312.01px;font-size:6.27px;color:#3c3c3c;font-weight:500;transform:scaleX(0.9009);">9</span>
<div class="a" style="left:35.20px;top:322.70px;width:50.40px;height:9.40px;background:rgba(244,244,244,0.88);"></div>
<span class="t" id="t48" style="left:52.90px;top:325.05px;font-size:5.70px;color:#3c3c3c;font-weight:500;transform:scaleX(0.7019);">フィレット</span><span class="t" id="t49" style="left:72.78px;top:324.76px;font-size:6.27px;color:#3c3c3c;font-weight:500;transform:scaleX(0.9046);">10</span>
<div class="a" style="left:35.20px;top:335.45px;width:39.70px;height:9.40px;background:rgba(244,244,244,0.88);"></div>
<span class="t" id="t50" style="left:50.80px;top:337.80px;font-size:5.70px;color:#3c3c3c;font-weight:500;transform:scaleX(0.6744);">ミラー</span><span class="t" id="t51" style="left:62.31px;top:337.51px;font-size:6.27px;color:#3c3c3c;font-weight:500;transform:scaleX(0.8725);">18</span>
<div class="a" style="left:35.20px;top:348.20px;width:50.50px;height:9.40px;background:rgba(244,244,244,0.88);"></div>
<span class="t" id="t52" style="left:52.90px;top:350.55px;font-size:5.70px;color:#3c3c3c;font-weight:500;transform:scaleX(0.8773);">押し出し</span><span class="t" id="t53" style="left:72.86px;top:350.26px;font-size:6.27px;color:#3c3c3c;font-weight:500;transform:scaleX(0.9080);">23</span>
<div class="a" style="left:35.20px;top:360.95px;width:50.50px;height:9.40px;background:rgba(244,244,244,0.88);"></div>
<span class="t" id="t54" style="left:52.90px;top:363.30px;font-size:5.70px;color:#3c3c3c;font-weight:500;transform:scaleX(0.8773);">押し出し</span><span class="t" id="t55" style="left:72.86px;top:363.01px;font-size:6.27px;color:#3c3c3c;font-weight:500;transform:scaleX(0.9080);">24</span>
<div class="a" style="left:35.20px;top:373.70px;width:41.60px;height:9.40px;background:rgba(244,244,244,0.88);"></div>
<span class="t" id="t56" style="left:52.90px;top:376.05px;font-size:5.70px;color:#3c3c3c;font-weight:500;transform:scaleX(0.9353);">回転</span><span class="t" id="t57" style="left:63.54px;top:375.76px;font-size:6.27px;color:#3c3c3c;font-weight:500;transform:scaleX(0.9681);">25</span>
<div class="a" style="left:35.20px;top:386.45px;width:50.60px;height:9.40px;background:rgba(244,244,244,0.88);"></div>
<span class="t" id="t58" style="left:52.90px;top:388.80px;font-size:5.70px;color:#3c3c3c;font-weight:500;transform:scaleX(0.7072);">フィレット</span><span class="t" id="t59" style="left:72.93px;top:388.51px;font-size:6.27px;color:#3c3c3c;font-weight:500;transform:scaleX(0.9115);">26</span>
<div class="a" style="left:35.20px;top:399.20px;width:50.60px;height:9.40px;background:rgba(244,244,244,0.88);"></div>
<span class="t" id="t60" style="left:52.90px;top:401.55px;font-size:5.70px;color:#3c3c3c;font-weight:500;transform:scaleX(0.7072);">フィレット</span><span class="t" id="t61" style="left:72.93px;top:401.26px;font-size:6.27px;color:#3c3c3c;font-weight:500;transform:scaleX(0.9115);">27</span>
<div class="a" style="left:35.20px;top:411.95px;width:50.50px;height:9.40px;background:rgba(244,244,244,0.88);"></div>
<span class="t" id="t62" style="left:52.90px;top:414.30px;font-size:5.70px;color:#3c3c3c;font-weight:500;transform:scaleX(0.8773);">押し出し</span><span class="t" id="t63" style="left:72.86px;top:414.01px;font-size:6.27px;color:#3c3c3c;font-weight:500;transform:scaleX(0.9080);">28</span>
<div class="a" style="left:35.20px;top:424.70px;width:50.50px;height:9.40px;background:rgba(244,244,244,0.88);"></div>
<span class="t" id="t64" style="left:52.90px;top:427.05px;font-size:5.70px;color:#3c3c3c;font-weight:500;transform:scaleX(0.8773);">押し出し</span><span class="t" id="t65" style="left:72.86px;top:426.76px;font-size:6.27px;color:#3c3c3c;font-weight:500;transform:scaleX(0.9080);">29</span>
<div class="a" style="left:35.20px;top:437.45px;width:39.90px;height:9.40px;background:rgba(244,244,244,0.88);"></div>
<span class="t" id="t66" style="left:50.80px;top:439.80px;font-size:5.70px;color:#3c3c3c;font-weight:500;transform:scaleX(0.6820);">ミラー</span><span class="t" id="t67" style="left:62.44px;top:439.51px;font-size:6.27px;color:#3c3c3c;font-weight:500;transform:scaleX(0.8824);">30</span>
<div class="a" style="left:35.20px;top:450.20px;width:50.50px;height:9.40px;background:rgba(244,244,244,0.88);"></div>
<span class="t" id="t68" style="left:52.90px;top:452.55px;font-size:5.70px;color:#3c3c3c;font-weight:500;transform:scaleX(0.8773);">押し出し</span><span class="t" id="t69" style="left:72.86px;top:452.26px;font-size:6.27px;color:#3c3c3c;font-weight:500;transform:scaleX(0.9080);">37</span>
<div class="a" style="left:35.20px;top:462.95px;width:50.50px;height:9.40px;background:rgba(244,244,244,0.88);"></div>
<span class="t" id="t70" style="left:52.90px;top:465.30px;font-size:5.70px;color:#3c3c3c;font-weight:500;transform:scaleX(0.8773);">押し出し</span><span class="t" id="t71" style="left:72.86px;top:465.01px;font-size:6.27px;color:#3c3c3c;font-weight:500;transform:scaleX(0.9080);">38</span>
<div class="a" style="left:35.20px;top:475.70px;width:50.50px;height:9.40px;background:rgba(244,244,244,0.88);"></div>
<span class="t" id="t72" style="left:52.90px;top:478.05px;font-size:5.70px;color:#3c3c3c;font-weight:500;transform:scaleX(0.8773);">押し出し</span><span class="t" id="t73" style="left:72.86px;top:477.76px;font-size:6.27px;color:#3c3c3c;font-weight:500;transform:scaleX(0.9080);">43</span>
<div class="a" style="left:35.20px;top:488.45px;width:41.60px;height:9.40px;background:rgba(244,244,244,0.88);"></div>
<span class="t" id="t74" style="left:52.90px;top:490.80px;font-size:5.70px;color:#3c3c3c;font-weight:500;transform:scaleX(0.9353);">回転</span><span class="t" id="t75" style="left:63.54px;top:490.51px;font-size:6.27px;color:#3c3c3c;font-weight:500;transform:scaleX(0.9681);">45</span>
<div class="a" style="left:35.20px;top:501.20px;width:50.60px;height:9.40px;background:rgba(244,244,244,0.88);"></div>
<span class="t" id="t76" style="left:52.90px;top:503.55px;font-size:5.70px;color:#3c3c3c;font-weight:500;transform:scaleX(0.7072);">フィレット</span><span class="t" id="t77" style="left:72.93px;top:503.26px;font-size:6.27px;color:#3c3c3c;font-weight:500;transform:scaleX(0.9115);">46</span>
<div class="a" style="left:35.20px;top:513.95px;width:50.60px;height:9.40px;background:rgba(244,244,244,0.88);"></div>
<span class="t" id="t78" style="left:52.90px;top:516.30px;font-size:5.70px;color:#3c3c3c;font-weight:500;transform:scaleX(0.7072);">フィレット</span><span class="t" id="t79" style="left:72.93px;top:516.01px;font-size:6.27px;color:#3c3c3c;font-weight:500;transform:scaleX(0.9115);">47</span>
<div class="a" style="left:35.20px;top:526.70px;width:50.50px;height:9.40px;background:rgba(244,244,244,0.88);"></div>
<span class="t" id="t80" style="left:52.90px;top:529.05px;font-size:5.70px;color:#3c3c3c;font-weight:500;transform:scaleX(0.8773);">押し出し</span><span class="t" id="t81" style="left:72.86px;top:528.76px;font-size:6.27px;color:#3c3c3c;font-weight:500;transform:scaleX(0.9080);">48</span>
<div class="a" style="left:35.20px;top:539.45px;width:50.50px;height:9.40px;background:rgba(244,244,244,0.88);"></div>
<span class="t" id="t82" style="left:52.90px;top:541.80px;font-size:5.70px;color:#3c3c3c;font-weight:500;transform:scaleX(0.8773);">押し出し</span><span class="t" id="t83" style="left:72.86px;top:541.51px;font-size:6.27px;color:#3c3c3c;font-weight:500;transform:scaleX(0.9080);">49</span>
<div class="a" style="left:35.20px;top:552.20px;width:50.50px;height:9.40px;background:rgba(244,244,244,0.88);"></div>
<span class="t" id="t84" style="left:52.90px;top:554.55px;font-size:5.70px;color:#3c3c3c;font-weight:500;transform:scaleX(0.8773);">押し出し</span><span class="t" id="t85" style="left:72.86px;top:554.26px;font-size:6.27px;color:#3c3c3c;font-weight:500;transform:scaleX(0.9080);">51</span>
<div class="a" style="left:35.20px;top:564.95px;width:50.50px;height:9.40px;background:rgba(244,244,244,0.88);"></div>
<span class="t" id="t86" style="left:52.90px;top:567.30px;font-size:5.70px;color:#3c3c3c;font-weight:500;transform:scaleX(0.8773);">押し出し</span><span class="t" id="t87" style="left:72.86px;top:567.01px;font-size:6.27px;color:#3c3c3c;font-weight:500;transform:scaleX(0.9080);">59</span>
<div class="a" style="left:35.20px;top:577.70px;width:50.50px;height:9.40px;background:rgba(244,244,244,0.88);"></div>
<span class="t" id="t88" style="left:52.90px;top:580.05px;font-size:5.70px;color:#3c3c3c;font-weight:500;transform:scaleX(0.8773);">押し出し</span><span class="t" id="t89" style="left:72.86px;top:579.76px;font-size:6.27px;color:#3c3c3c;font-weight:500;transform:scaleX(0.9080);">60</span>
<svg class="a" style="left:0.00px;top:75.00px;" width="170" height="520" viewBox="0 75 170 520"><path d="M11.6 82.2l-1.2 1.2l1.2 1.2M13.6 82.2l-1.2 1.2l1.2 1.2" fill="#666" stroke="none"/><path d="M15.70 96.80l2.3 2.2l2.3-2.2" fill="none" stroke="#444" stroke-width="0.9"/><g transform="translate(31.00 97.90)"><path d="M-4.3 0C-2.6-2.9 2.6-2.9 4.3 0C2.6 2.9-2.6 2.9-4.3 0z" fill="#555"/><circle r="1.9" fill="#f4f4f4"/><circle r="1.15" fill="#555"/></g><g transform="translate(44.60 97.90)"><path d="M-3.8-2.2L-2-4h6v6L2.2 3.9h-6z" fill="#4a9be0"/><path d="M-3.8-2.2L-2-4h6L2.2-2.2z" fill="#8cc6f2"/><path d="M2.2-2.2L4-4v6L2.2 3.9z" fill="#2f7fc6"/></g><circle cx="94" cy="97.90" r="3.3" fill="#fff" stroke="#333" stroke-width="0.7"/><circle cx="94" cy="97.90" r="1.3" fill="#222"/><path d="M26.60 108.45l2.2 2.2l-2.2 2.2" fill="none" stroke="#555" stroke-width="0.8"/><g transform="translate(40.70 110.65)"><rect x="-0.95" y="-4.4" width="1.9" height="8.8" fill="#444" transform="rotate(0)"/><rect x="-0.95" y="-4.4" width="1.9" height="8.8" fill="#444" transform="rotate(45)"/><rect x="-0.95" y="-4.4" width="1.9" height="8.8" fill="#444" transform="rotate(90)"/><rect x="-0.95" y="-4.4" width="1.9" height="8.8" fill="#444" transform="rotate(135)"/><circle r="3.1" fill="#444"/><circle r="1.5" fill="#f4f4f4"/></g><path d="M26.60 121.20l2.2 2.2l-2.2 2.2" fill="none" stroke="#555" stroke-width="0.8"/><g transform="translate(40.60 123.40)"><path d="M-4-3.3h2.8l0.8 1.1h4.4v5.6h-8z" fill="#fafafa" stroke="#666" stroke-width="0.7"/><path d="M-4-2.2h3.6" stroke="#666" stroke-width="0.6"/></g><path d="M26.60 133.95l2.2 2.2l-2.2 2.2" fill="none" stroke="#555" stroke-width="0.8"/><g transform="translate(41.00 136.15)"><path d="M-4.3 0C-2.6-2.9 2.6-2.9 4.3 0C2.6 2.9-2.6 2.9-4.3 0z" fill="none" stroke="#9a9a9a" stroke-width="0.7"/><circle r="1.4" fill="none" stroke="#9a9a9a" stroke-width="0.7"/><path d="M-3-3L3 3" stroke="#9a9a9a" stroke-width="0.7"/></g><g transform="translate(54.00 136.15)"><path d="M-4-3.3h2.8l0.8 1.1h4.4v5.6h-8z" fill="#fafafa" stroke="#666" stroke-width="0.7"/><path d="M-4-2.2h3.6" stroke="#666" stroke-width="0.6"/></g><path d="M25.60 147.80l2.3 2.2l2.3-2.2" fill="none" stroke="#444" stroke-width="0.9"/><g transform="translate(41.00 148.90)"><path d="M-4.3 0C-2.6-2.9 2.6-2.9 4.3 0C2.6 2.9-2.6 2.9-4.3 0z" fill="#555"/><circle r="1.9" fill="#f4f4f4"/><circle r="1.15" fill="#555"/></g><g transform="translate(54.00 148.90)"><path d="M-4-3.3h2.8l0.8 1.1h4.4v5.6h-8z" fill="#fafafa" stroke="#666" stroke-width="0.7"/><path d="M-4-2.2h3.6" stroke="#666" stroke-width="0.6"/></g><path d="M35.70 159.45l2.2 2.2l-2.2 2.2" fill="none" stroke="#555" stroke-width="0.8"/><g transform="translate(50.70 161.65)"><path d="M-4.3 0C-2.6-2.9 2.6-2.9 4.3 0C2.6 2.9-2.6 2.9-4.3 0z" fill="none" stroke="#9a9a9a" stroke-width="0.7"/><circle r="1.4" fill="none" stroke="#9a9a9a" stroke-width="0.7"/><path d="M-3-3L3 3" stroke="#9a9a9a" stroke-width="0.7"/></g><g transform="translate(63.60 161.65)"><path d="M-4-3.3h2.8l0.8 1.1h4.4v5.6h-8z" fill="#fafafa" stroke="#666" stroke-width="0.7"/><path d="M-4-2.2h3.6" stroke="#666" stroke-width="0.6"/></g><g transform="translate(50.70 174.40)"><path d="M-4.3 0C-2.6-2.9 2.6-2.9 4.3 0C2.6 2.9-2.6 2.9-4.3 0z" fill="#555"/><circle r="1.9" fill="#f4f4f4"/><circle r="1.15" fill="#555"/></g><g transform="translate(63.60 174.40)"><path d="M-3.4-2.6v5.4a3.4 1.3 0 0 0 6.8 0v-5.4z" fill="#4a9be0"/><ellipse cx="0" cy="-2.7" rx="3.4" ry="1.3" fill="#8cc6f2"/></g><g transform="translate(50.70 187.15)"><path d="M-4.3 0C-2.6-2.9 2.6-2.9 4.3 0C2.6 2.9-2.6 2.9-4.3 0z" fill="#555"/><circle r="1.9" fill="#f4f4f4"/><circle r="1.15" fill="#555"/></g><g transform="translate(63.60 187.15)"><path d="M-3.4-2.6v5.4a3.4 1.3 0 0 0 6.8 0v-5.4z" fill="#4a9be0"/><ellipse cx="0" cy="-2.7" rx="3.4" ry="1.3" fill="#8cc6f2"/></g><g transform="translate(50.70 199.90)"><path d="M-4.3 0C-2.6-2.9 2.6-2.9 4.3 0C2.6 2.9-2.6 2.9-4.3 0z" fill="#555"/><circle r="1.9" fill="#f4f4f4"/><circle r="1.15" fill="#555"/></g><g transform="translate(63.60 199.90)"><path d="M-3.4-2.6v5.4a3.4 1.3 0 0 0 6.8 0v-5.4z" fill="#4a9be0"/><ellipse cx="0" cy="-2.7" rx="3.4" ry="1.3" fill="#8cc6f2"/></g><g transform="translate(50.70 212.65)"><path d="M-4.3 0C-2.6-2.9 2.6-2.9 4.3 0C2.6 2.9-2.6 2.9-4.3 0z" fill="#555"/><circle r="1.9" fill="#f4f4f4"/><circle r="1.15" fill="#555"/></g><g transform="translate(63.60 212.65)"><path d="M-3.4-2.6v5.4a3.4 1.3 0 0 0 6.8 0v-5.4z" fill="#4a9be0"/><ellipse cx="0" cy="-2.7" rx="3.4" ry="1.3" fill="#8cc6f2"/></g><g transform="translate(50.70 225.40)"><path d="M-4.3 0C-2.6-2.9 2.6-2.9 4.3 0C2.6 2.9-2.6 2.9-4.3 0z" fill="#555"/><circle r="1.9" fill="#f4f4f4"/><circle r="1.15" fill="#555"/></g><g transform="translate(63.60 225.40)"><path d="M-3.4-2.6v5.4a3.4 1.3 0 0 0 6.8 0v-5.4z" fill="#4a9be0"/><ellipse cx="0" cy="-2.7" rx="3.4" ry="1.3" fill="#8cc6f2"/></g><g transform="translate(50.70 238.15)"><path d="M-4.3 0C-2.6-2.9 2.6-2.9 4.3 0C2.6 2.9-2.6 2.9-4.3 0z" fill="#555"/><circle r="1.9" fill="#f4f4f4"/><circle r="1.15" fill="#555"/></g><g transform="translate(63.60 238.15)"><path d="M-3.4-2.6v5.4a3.4 1.3 0 0 0 6.8 0v-5.4z" fill="#4a9be0"/><ellipse cx="0" cy="-2.7" rx="3.4" ry="1.3" fill="#8cc6f2"/></g><g transform="translate(50.70 250.90)"><path d="M-4.3 0C-2.6-2.9 2.6-2.9 4.3 0C2.6 2.9-2.6 2.9-4.3 0z" fill="#555"/><circle r="1.9" fill="#f4f4f4"/><circle r="1.15" fill="#555"/></g><g transform="translate(63.60 250.90)"><path d="M-3.4-2.6v5.4a3.4 1.3 0 0 0 6.8 0v-5.4z" fill="#4a9be0"/><ellipse cx="0" cy="-2.7" rx="3.4" ry="1.3" fill="#8cc6f2"/></g><g transform="translate(50.70 263.65)"><path d="M-4.3 0C-2.6-2.9 2.6-2.9 4.3 0C2.6 2.9-2.6 2.9-4.3 0z" fill="#555"/><circle r="1.9" fill="#f4f4f4"/><circle r="1.15" fill="#555"/></g><g transform="translate(63.60 263.65)"><path d="M-3.4-2.6v5.4a3.4 1.3 0 0 0 6.8 0v-5.4z" fill="#4a9be0"/><ellipse cx="0" cy="-2.7" rx="3.4" ry="1.3" fill="#8cc6f2"/></g><path d="M26.60 274.20l2.2 2.2l-2.2 2.2" fill="none" stroke="#555" stroke-width="0.8"/><g transform="translate(41.00 276.40)"><path d="M-4.3 0C-2.6-2.9 2.6-2.9 4.3 0C2.6 2.9-2.6 2.9-4.3 0z" fill="#555"/><circle r="1.9" fill="#f4f4f4"/><circle r="1.15" fill="#555"/></g><g transform="translate(54.00 276.40)"><path d="M-4-3.3h2.8l0.8 1.1h4.4v5.6h-8z" fill="#fafafa" stroke="#666" stroke-width="0.7"/><path d="M-4-2.2h3.6" stroke="#666" stroke-width="0.6"/></g><g transform="translate(40.60 289.15)"><path d="M-4 3.2h5.4l1.4-1v1l-1.4 1.2H-4z" fill="#c4c4c4"/><path d="M-4-2.6h5.4v5.8H-4z" fill="#4a9be0"/><path d="M-4-2.6l1.4-1.4h5.4l-1.4 1.4z" fill="#8cc6f2"/><path d="M1.4-2.6l1.4-1.4v6.2l-1.4 1z" fill="#2f7fc6"/><path d="M3.9-3.8v7" stroke="#333" stroke-width="0.6"/></g><g transform="translate(40.60 301.90)"><path d="M-3.4-2.6C-1.6-4 1.6-4 3.4-2.6" fill="none" stroke="#444" stroke-width="0.7"/><path d="M-4-0.6C-3-2.6 3-2.6 4-0.6v2.4l-1.2 1.2c-1-1-4.6-1-5.6 0L-4 1.8z" fill="#4a9be0"/><path d="M-4-0.6C-3-2.6 3-2.6 4-0.6C3 0.6-3 0.6-4-0.6z" fill="#8cc6f2"/><ellipse cx="3.6" cy="0.9" rx="0.8" ry="1.4" fill="#e8eef4"/><ellipse cx="-3.6" cy="0.9" rx="0.8" ry="1.4" fill="#e8eef4"/></g><g transform="translate(40.60 314.65)"><path d="M-3.8 3.8v-5.4l1.8-2.2h1.8c3 0 4.4 2 4.4 4.6v1.4l-1.6 1.6z" fill="#dcdcdc" stroke="#666" stroke-width="0.7"/><path d="M-0.4-3.8c3 0 4.6 2 4.6 4.6l-1.6 0.4c0-2.2-1.2-3.6-3.6-3.8z" fill="#4a9be0"/></g><g transform="translate(40.60 327.40)"><path d="M-3.8 3.8v-5.4l1.8-2.2h1.8c3 0 4.4 2 4.4 4.6v1.4l-1.6 1.6z" fill="#dcdcdc" stroke="#666" stroke-width="0.7"/><path d="M-0.4-3.8c3 0 4.6 2 4.6 4.6l-1.6 0.4c0-2.2-1.2-3.6-3.6-3.8z" fill="#4a9be0"/></g><g transform="translate(40.60 340.15)"><path d="M0-4L3.8 3.8H0z" fill="#4a9be0"/><path d="M-0.2-4L-3.8 3.8h3.6z" fill="#fafafa" stroke="#777" stroke-width="0.6"/><path d="M0-4.4v8.6" stroke="#6a7f96" stroke-width="0.5"/></g><path d="M26.60 337.95l2.2 2.2l-2.2 2.2" fill="none" stroke="#555" stroke-width="0.8"/><g transform="translate(40.60 352.90)"><path d="M-4 3.2h5.4l1.4-1v1l-1.4 1.2H-4z" fill="#c4c4c4"/><path d="M-4-2.6h5.4v5.8H-4z" fill="#4a9be0"/><path d="M-4-2.6l1.4-1.4h5.4l-1.4 1.4z" fill="#8cc6f2"/><path d="M1.4-2.6l1.4-1.4v6.2l-1.4 1z" fill="#2f7fc6"/><path d="M3.9-3.8v7" stroke="#333" stroke-width="0.6"/></g><g transform="translate(40.60 365.65)"><path d="M-4 3.2h5.4l1.4-1v1l-1.4 1.2H-4z" fill="#c4c4c4"/><path d="M-4-2.6h5.4v5.8H-4z" fill="#4a9be0"/><path d="M-4-2.6l1.4-1.4h5.4l-1.4 1.4z" fill="#8cc6f2"/><path d="M1.4-2.6l1.4-1.4v6.2l-1.4 1z" fill="#2f7fc6"/><path d="M3.9-3.8v7" stroke="#333" stroke-width="0.6"/></g><g transform="translate(40.60 378.40)"><path d="M-3.4-2.6C-1.6-4 1.6-4 3.4-2.6" fill="none" stroke="#444" stroke-width="0.7"/><path d="M-4-0.6C-3-2.6 3-2.6 4-0.6v2.4l-1.2 1.2c-1-1-4.6-1-5.6 0L-4 1.8z" fill="#4a9be0"/><path d="M-4-0.6C-3-2.6 3-2.6 4-0.6C3 0.6-3 0.6-4-0.6z" fill="#8cc6f2"/><ellipse cx="3.6" cy="0.9" rx="0.8" ry="1.4" fill="#e8eef4"/><ellipse cx="-3.6" cy="0.9" rx="0.8" ry="1.4" fill="#e8eef4"/></g><g transform="translate(40.60 391.15)"><path d="M-3.8 3.8v-5.4l1.8-2.2h1.8c3 0 4.4 2 4.4 4.6v1.4l-1.6 1.6z" fill="#dcdcdc" stroke="#666" stroke-width="0.7"/><path d="M-0.4-3.8c3 0 4.6 2 4.6 4.6l-1.6 0.4c0-2.2-1.2-3.6-3.6-3.8z" fill="#4a9be0"/></g><g transform="translate(40.60 403.90)"><path d="M-3.8 3.8v-5.4l1.8-2.2h1.8c3 0 4.4 2 4.4 4.6v1.4l-1.6 1.6z" fill="#dcdcdc" stroke="#666" stroke-width="0.7"/><path d="M-0.4-3.8c3 0 4.6 2 4.6 4.6l-1.6 0.4c0-2.2-1.2-3.6-3.6-3.8z" fill="#4a9be0"/></g><g transform="translate(40.60 416.65)"><path d="M-4 3.2h5.4l1.4-1v1l-1.4 1.2H-4z" fill="#c4c4c4"/><path d="M-4-2.6h5.4v5.8H-4z" fill="#4a9be0"/><path d="M-4-2.6l1.4-1.4h5.4l-1.4 1.4z" fill="#8cc6f2"/><path d="M1.4-2.6l1.4-1.4v6.2l-1.4 1z" fill="#2f7fc6"/><path d="M3.9-3.8v7" stroke="#333" stroke-width="0.6"/></g><g transform="translate(40.60 429.40)"><path d="M-4 3.2h5.4l1.4-1v1l-1.4 1.2H-4z" fill="#c4c4c4"/><path d="M-4-2.6h5.4v5.8H-4z" fill="#4a9be0"/><path d="M-4-2.6l1.4-1.4h5.4l-1.4 1.4z" fill="#8cc6f2"/><path d="M1.4-2.6l1.4-1.4v6.2l-1.4 1z" fill="#2f7fc6"/><path d="M3.9-3.8v7" stroke="#333" stroke-width="0.6"/></g><g transform="translate(40.60 442.15)"><path d="M0-4L3.8 3.8H0z" fill="#4a9be0"/><path d="M-0.2-4L-3.8 3.8h3.6z" fill="#fafafa" stroke="#777" stroke-width="0.6"/><path d="M0-4.4v8.6" stroke="#6a7f96" stroke-width="0.5"/></g><path d="M26.60 439.95l2.2 2.2l-2.2 2.2" fill="none" stroke="#555" stroke-width="0.8"/><g transform="translate(40.60 454.90)"><path d="M-4 3.2h5.4l1.4-1v1l-1.4 1.2H-4z" fill="#c4c4c4"/><path d="M-4-2.6h5.4v5.8H-4z" fill="#4a9be0"/><path d="M-4-2.6l1.4-1.4h5.4l-1.4 1.4z" fill="#8cc6f2"/><path d="M1.4-2.6l1.4-1.4v6.2l-1.4 1z" fill="#2f7fc6"/><path d="M3.9-3.8v7" stroke="#333" stroke-width="0.6"/></g><g transform="translate(40.60 467.65)"><path d="M-4 3.2h5.4l1.4-1v1l-1.4 1.2H-4z" fill="#c4c4c4"/><path d="M-4-2.6h5.4v5.8H-4z" fill="#4a9be0"/><path d="M-4-2.6l1.4-1.4h5.4l-1.4 1.4z" fill="#8cc6f2"/><path d="M1.4-2.6l1.4-1.4v6.2l-1.4 1z" fill="#2f7fc6"/><path d="M3.9-3.8v7" stroke="#333" stroke-width="0.6"/></g><g transform="translate(40.60 480.40)"><path d="M-4 3.2h5.4l1.4-1v1l-1.4 1.2H-4z" fill="#c4c4c4"/><path d="M-4-2.6h5.4v5.8H-4z" fill="#4a9be0"/><path d="M-4-2.6l1.4-1.4h5.4l-1.4 1.4z" fill="#8cc6f2"/><path d="M1.4-2.6l1.4-1.4v6.2l-1.4 1z" fill="#2f7fc6"/><path d="M3.9-3.8v7" stroke="#333" stroke-width="0.6"/></g><g transform="translate(40.60 493.15)"><path d="M-3.4-2.6C-1.6-4 1.6-4 3.4-2.6" fill="none" stroke="#444" stroke-width="0.7"/><path d="M-4-0.6C-3-2.6 3-2.6 4-0.6v2.4l-1.2 1.2c-1-1-4.6-1-5.6 0L-4 1.8z" fill="#4a9be0"/><path d="M-4-0.6C-3-2.6 3-2.6 4-0.6C3 0.6-3 0.6-4-0.6z" fill="#8cc6f2"/><ellipse cx="3.6" cy="0.9" rx="0.8" ry="1.4" fill="#e8eef4"/><ellipse cx="-3.6" cy="0.9" rx="0.8" ry="1.4" fill="#e8eef4"/></g><g transform="translate(40.60 505.90)"><path d="M-3.8 3.8v-5.4l1.8-2.2h1.8c3 0 4.4 2 4.4 4.6v1.4l-1.6 1.6z" fill="#dcdcdc" stroke="#666" stroke-width="0.7"/><path d="M-0.4-3.8c3 0 4.6 2 4.6 4.6l-1.6 0.4c0-2.2-1.2-3.6-3.6-3.8z" fill="#4a9be0"/></g><g transform="translate(40.60 518.65)"><path d="M-3.8 3.8v-5.4l1.8-2.2h1.8c3 0 4.4 2 4.4 4.6v1.4l-1.6 1.6z" fill="#dcdcdc" stroke="#666" stroke-width="0.7"/><path d="M-0.4-3.8c3 0 4.6 2 4.6 4.6l-1.6 0.4c0-2.2-1.2-3.6-3.6-3.8z" fill="#4a9be0"/></g><g transform="translate(40.60 531.40)"><path d="M-4 3.2h5.4l1.4-1v1l-1.4 1.2H-4z" fill="#c4c4c4"/><path d="M-4-2.6h5.4v5.8H-4z" fill="#4a9be0"/><path d="M-4-2.6l1.4-1.4h5.4l-1.4 1.4z" fill="#8cc6f2"/><path d="M1.4-2.6l1.4-1.4v6.2l-1.4 1z" fill="#2f7fc6"/><path d="M3.9-3.8v7" stroke="#333" stroke-width="0.6"/></g><g transform="translate(40.60 544.15)"><path d="M-4 3.2h5.4l1.4-1v1l-1.4 1.2H-4z" fill="#c4c4c4"/><path d="M-4-2.6h5.4v5.8H-4z" fill="#4a9be0"/><path d="M-4-2.6l1.4-1.4h5.4l-1.4 1.4z" fill="#8cc6f2"/><path d="M1.4-2.6l1.4-1.4v6.2l-1.4 1z" fill="#2f7fc6"/><path d="M3.9-3.8v7" stroke="#333" stroke-width="0.6"/></g><g transform="translate(40.60 556.90)"><path d="M-4 3.2h5.4l1.4-1v1l-1.4 1.2H-4z" fill="#c4c4c4"/><path d="M-4-2.6h5.4v5.8H-4z" fill="#4a9be0"/><path d="M-4-2.6l1.4-1.4h5.4l-1.4 1.4z" fill="#8cc6f2"/><path d="M1.4-2.6l1.4-1.4v6.2l-1.4 1z" fill="#2f7fc6"/><path d="M3.9-3.8v7" stroke="#333" stroke-width="0.6"/></g><g transform="translate(40.60 569.65)"><path d="M-4 3.2h5.4l1.4-1v1l-1.4 1.2H-4z" fill="#c4c4c4"/><path d="M-4-2.6h5.4v5.8H-4z" fill="#4a9be0"/><path d="M-4-2.6l1.4-1.4h5.4l-1.4 1.4z" fill="#8cc6f2"/><path d="M1.4-2.6l1.4-1.4v6.2l-1.4 1z" fill="#2f7fc6"/><path d="M3.9-3.8v7" stroke="#333" stroke-width="0.6"/></g><g transform="translate(40.60 582.40)"><path d="M-4 3.2h5.4l1.4-1v1l-1.4 1.2H-4z" fill="#c4c4c4"/><path d="M-4-2.6h5.4v5.8H-4z" fill="#4a9be0"/><path d="M-4-2.6l1.4-1.4h5.4l-1.4 1.4z" fill="#8cc6f2"/><path d="M1.4-2.6l1.4-1.4v6.2l-1.4 1z" fill="#2f7fc6"/><path d="M3.9-3.8v7" stroke="#333" stroke-width="0.6"/></g></svg>
<div id="ribbon" class="a" style="left:4px;top:29px;width:1020px;height:43.8px;background:#f4f4f4"></div>
<div class="a" style="left:4px;top:72.8px;width:1020px;height:2px;background:linear-gradient(#dcdcdc,rgba(235,235,235,0))"></div>
<div id="workspace" class="a" style="left:10.5px;top:34.5px;width:57px;height:31.5px;border:0.8px solid #dadada;border-radius:3px;background:#f6f6f6"></div>
<span class="t" id="t90" style="left:27.80px;top:47.85px;font-size:6.30px;color:#333;font-weight:700;transform:scaleX(0.7385);">デザイン</span>
<svg class="a" style="left:50.30px;top:50.20px;" width="3" height="1.86" viewBox="0 0 3 1.86"><path d="M0 0H3 L1.5 1.86 Z" fill="#555"/></svg>
<span class="t" id="t91" style="left:83.90px;top:32.75px;font-size:5.90px;color:#333;font-weight:700;transform:scaleX(0.7151);">ソリッド</span>
<span class="t" id="t92" style="left:125.75px;top:32.75px;font-size:5.90px;color:#444;font-weight:500;transform:scaleX(0.6871);">サーフェス</span>
<span class="t" id="t93" style="left:172.00px;top:32.75px;font-size:5.90px;color:#444;font-weight:500;transform:scaleX(0.7172);">メッシュ</span>
<span class="t" id="t94" style="left:213.75px;top:32.75px;font-size:5.90px;color:#444;font-weight:500;transform:scaleX(0.7204);">フォーム</span>
<span class="t" id="t95" style="left:255.00px;top:32.75px;font-size:5.90px;color:#444;font-weight:500;transform:scaleX(0.7298);">シート</span><span class="t" id="t96" style="left:269.60px;top:32.75px;font-size:5.90px;color:#444;font-weight:500;transform:scaleX(0.7298);">メタル</span>
<span class="t" id="t97" style="left:310.00px;top:32.75px;font-size:5.90px;color:#444;font-weight:500;transform:scaleX(0.6925);">プラスチック</span>
<span class="t" id="t98" style="left:361.90px;top:32.75px;font-size:5.90px;color:#444;font-weight:500;transform:scaleX(0.9507);">管理</span>
<span class="t" id="t99" style="left:398.10px;top:32.75px;font-size:5.90px;color:#444;font-weight:500;transform:scaleX(0.6785);">ユーティリティ</span>
<div class="a" style="left:78.00px;top:39.90px;width:30.30px;height:1.50px;background:#444;"></div>
<span class="t" id="t100" style="left:122.00px;top:64.95px;font-size:5.70px;color:#444;font-weight:500;transform:scaleX(0.9319);">作成</span>
<svg class="a" style="left:134.50px;top:66.90px;" width="3" height="1.86" viewBox="0 0 3 1.86"><path d="M0 0H3 L1.5 1.86 Z" fill="#555"/></svg>
<span class="t" id="t101" style="left:253.75px;top:64.95px;font-size:5.70px;color:#444;font-weight:500;transform:scaleX(0.9451);">修正</span>
<svg class="a" style="left:267.10px;top:66.90px;" width="3" height="1.86" viewBox="0 0 3 1.86"><path d="M0 0H3 L1.5 1.86 Z" fill="#555"/></svg>
<span class="t" id="t102" style="left:368.10px;top:64.95px;font-size:5.70px;color:#444;font-weight:500;transform:scaleX(0.7636);">アセンブリ</span>
<svg class="a" style="left:392.10px;top:66.90px;" width="3" height="1.86" viewBox="0 0 3 1.86"><path d="M0 0H3 L1.5 1.86 Z" fill="#555"/></svg>
<span class="t" id="t103" style="left:440.00px;top:64.95px;font-size:5.70px;color:#444;font-weight:500;transform:scaleX(0.7331);">コンフィギュレーション</span>
<svg class="a" style="left:488.30px;top:66.90px;" width="3" height="1.86" viewBox="0 0 3 1.86"><path d="M0 0H3 L1.5 1.86 Z" fill="#555"/></svg>
<span class="t" id="t104" style="left:507.50px;top:64.95px;font-size:5.70px;color:#444;font-weight:500;transform:scaleX(0.9231);">構築</span>
<svg class="a" style="left:520.80px;top:66.90px;" width="3" height="1.86" viewBox="0 0 3 1.86"><path d="M0 0H3 L1.5 1.86 Z" fill="#555"/></svg>
<span class="t" id="t105" style="left:538.75px;top:64.95px;font-size:5.70px;color:#444;font-weight:500;transform:scaleX(0.9363);">検査</span>
<svg class="a" style="left:552.10px;top:66.90px;" width="3" height="1.86" viewBox="0 0 3 1.86"><path d="M0 0H3 L1.5 1.86 Z" fill="#555"/></svg>
<span class="t" id="t106" style="left:578.75px;top:64.95px;font-size:5.70px;color:#444;font-weight:500;transform:scaleX(0.9363);">挿入</span>
<svg class="a" style="left:592.10px;top:66.90px;" width="3" height="1.86" viewBox="0 0 3 1.86"><path d="M0 0H3 L1.5 1.86 Z" fill="#555"/></svg>
<span class="t" id="t107" style="left:621.90px;top:64.95px;font-size:5.70px;color:#444;font-weight:500;transform:scaleX(0.9231);">選択</span>
<svg class="a" style="left:635.10px;top:66.90px;" width="3" height="1.86" viewBox="0 0 3 1.86"><path d="M0 0H3 L1.5 1.86 Z" fill="#555"/></svg>
<div class="a" style="left:189.70px;top:43.00px;width:0.80px;height:27.00px;background:#dcdcdc;"></div>
<div class="a" style="left:333.10px;top:43.00px;width:0.80px;height:27.00px;background:#dcdcdc;"></div>
<div class="a" style="left:430.20px;top:43.00px;width:0.80px;height:27.00px;background:#dcdcdc;"></div>
<div class="a" style="left:498.60px;top:43.00px;width:0.80px;height:27.00px;background:#dcdcdc;"></div>
<div class="a" style="left:530.20px;top:43.00px;width:0.80px;height:27.00px;background:#dcdcdc;"></div>
<div class="a" style="left:561.50px;top:43.00px;width:0.80px;height:27.00px;background:#dcdcdc;"></div>
<div class="a" style="left:613.10px;top:43.00px;width:0.80px;height:27.00px;background:#dcdcdc;"></div>
<div class="a" style="left:619px;top:41px;width:20.4px;height:20.8px;background:#dcebf7;border:0.7px solid #b9d8f0;border-radius:1.5px"></div>
<svg class="a" style="left:0.00px;top:0.00px;" width="660" height="75" viewBox="0 0 660 75"><g transform="translate(77.00 43.60)"><rect x="1" y="1" width="13.6" height="13.6" fill="#fafafa" stroke="#555" stroke-width="0.7" stroke-dasharray="1.2 0.9"/><rect x="0.2" y="0.2" width="1.6" height="1.6" fill="#333"/><rect x="13.8" y="0.2" width="1.6" height="1.6" fill="#333"/><rect x="0.2" y="13.8" width="1.6" height="1.6" fill="#333"/><path d="M4.2 4h8.4c0 4.5-3.5 8-8.4 8.4z" fill="none" stroke="#444" stroke-width="0.8"/><path d="M9.4 12.6h2.9v-2.9h2v2.9h2.9v2h-2.9v2.9h-2v-2.9H9.4z" fill="#21a038"/></g><g transform="translate(100.50 43.60)"><path d="M0.3 13.2l9.2 0l3.2-1.6v1.6l-3.2 1.8l-9.2 0z" fill="#c9c9c9"/><path d="M0.3 3l9.2 0v10.6H0.3z" fill="#4a9be0"/><path d="M0.3 3L3.6 0.2h9.1L9.5 3z" fill="#8cc6f2"/><path d="M9.5 3l3.2-2.8v11.4l-3.2 2z" fill="#2f7fc6"/><path d="M14.6 1.2v12.4" stroke="#333" stroke-width="0.8"/><path d="M13.6 2.6l1-2l1 2z" fill="#333"/></g><g transform="translate(122.00 44.20)"><path d="M1 3.6C4.5 0.4 12 0.2 16.6 3.2" fill="none" stroke="#333" stroke-width="0.8"/><path d="M0.4 4.2l2.6-1.6l-0.4 2.4z" fill="#333"/><path d="M1 9.2C2 4.8 14 3.6 17.4 7.6l0 3.4l-3.6 1.6C11 11 6.5 11.6 4.2 14.6L1 12.6z" fill="#4a9be0"/><path d="M1 9.2C2 4.8 14 3.6 17.4 7.6L13.8 9.4C11 7.8 6.5 8.6 4.2 11.4z" fill="#8cc6f2"/><path d="M13.8 9.4l3.6-1.8v3.4l-3.6 1.6z" fill="#e9eef2" stroke="#888" stroke-width="0.4"/></g><g transform="translate(145.00 43.00)"><path d="M0.6 5L5 0.6h12.2v12.2L12.8 17.4H0.6z" fill="#e3e3e3" stroke="#8a8a8a" stroke-width="0.6"/><path d="M0.6 5h12.2v12.4H0.6z" fill="#d6d6d6" stroke="#8a8a8a" stroke-width="0.6"/><path d="M12.8 5L17.2 0.6" stroke="#8a8a8a" stroke-width="0.6"/><circle cx="6.6" cy="11.2" r="4.6" fill="#fff" stroke="#777" stroke-width="0.7"/><path d="M6.6 6.6a4.6 4.6 0 1 0 4.4 6.2C8 13 5.6 10 6.6 6.6z" fill="#4a9be0"/></g><g transform="translate(168.20 44.90)"><path d="M2 1.7h11.6M2 13h11.6M2 1.7V13" stroke="#777" stroke-width="0.7" fill="none"/><circle cx="2" cy="1.9" r="1.6" fill="#fff" stroke="#555" stroke-width="0.7"/><rect x="11.6" y="0.2" width="3.4" height="3.4" fill="#4a9be0"/><rect x="0.3" y="11.3" width="3.4" height="3.4" fill="#4a9be0"/><rect x="11.6" y="11.3" width="3.4" height="3.4" fill="#4a9be0"/></g><g transform="translate(196.90 43.00)"><path d="M0.6 4.6L4.4 0.6h3v16.6H0.6z" fill="#e3e3e3" stroke="#8a8a8a" stroke-width="0.6"/><path d="M4.6 4.4L7.6 0.8h4.2L12 13.6L9.2 17.2H4.6z" fill="#4a9be0"/><path d="M9.2 4.6l2.8-3.8v12.8l-2.8 3.6z" fill="#2f7fc6"/><path d="M4.6 4.4L7.6 0.8h4.2L9.2 4.4z" fill="#8cc6f2"/><path d="M11.6 8.6h3" stroke="#222" stroke-width="0.8"/><path d="M14.2 7.4l2 1.2l-2 1.2z" fill="#222"/></g><g transform="translate(219.70 43.00)"><path d="M0.6 4.8L5 0.6h12v12.2l-4.4 4.6H0.6z" fill="#c9c9c9" stroke="#8a8a8a" stroke-width="0.6"/><path d="M0.6 4.8h12v12.6H0.6z" fill="#dedede" stroke="#8a8a8a" stroke-width="0.6"/><path d="M12.6 4.8L17 0.6" stroke="#8a8a8a" stroke-width="0.6"/><path d="M2.8 7h7.6v8H2.8z" fill="#fff"/><path d="M2.8 7h3v5h4.6v3H2.8z" fill="#4a9be0"/></g><g transform="translate(242.20 43.00)"><path d="M0.6 17.2V6.4L5.6 0.8h3.6c5 0 8.2 3.6 8.2 8.4v3.6l-4.2 4.4z" fill="#d9d9d9" stroke="#8a8a8a" stroke-width="0.6"/><path d="M5.6 0.8h3.6c5 0 8.2 3.6 8.2 8.4v3l-4.4 0.2c0-4.6-2.6-7.2-7-7.4l-2.4 0.2z" fill="#4a9be0"/><path d="M0.6 6.4l3-1.2l2.4-0.2c4.4 0.2 7 2.8 7 7.4v4.8" fill="none" stroke="#999" stroke-width="0.5"/></g><g transform="translate(265.00 43.00)"><path d="M0.6 9.6l3-2.6h4.6V3.2l3-2.6h6.4v7.8l-3 2.6h-3.6v3.6l-3 2.4H0.6z" fill="#4a9be0"/><path d="M0.6 9.6l3-2.6h4.6V3.2l3-2.6h6.4l-3 2.6H8.4v3.8l-0.2 2.6z" fill="#8cc6f2"/><path d="M14.6 3.2l3-2.6v7.8l-3 2.6zM8 11l3-0.2v3.8l-3 2.4z" fill="#2f7fc6"/></g><g transform="translate(288.10 43.00)"><path d="M1.6 9.6h11.2l3.4-2v6.6l-3.4 2.6H1.6z" fill="#dcdcdc" stroke="#999" stroke-width="0.5"/><path d="M1.6 3.4L5 0.6h11.2v5.6l-3.4 2.6H1.6z" fill="#4a9be0"/><path d="M1.6 3.4L5 0.6h11.2l-3.4 2.8z" fill="#8cc6f2"/><path d="M12.8 3.4l3.4-2.8v5.6l-3.4 2.6z" fill="#2f7fc6"/><path d="M0.2 10.2h12.8l4.4-3.4" fill="none" stroke="#4a9be0" stroke-width="0.9"/></g><g transform="translate(311.20 43.60)"><path d="M8.4 1.6v13M1.8 8.2h13.2" stroke="#222" stroke-width="1.3"/><path d="M8.4 0l2.4 3h-4.8zM8.4 16.4l2.4-3h-4.8zM0 8.2l3-2.4v4.8zM16.8 8.2l-3-2.4v4.8z" fill="#222"/></g><g transform="translate(340.00 43.60)"><path d="M2.4 5.4L5.6 2.6h9v9.4l-3.2 3H2.4z" fill="#dedede" stroke="#999" stroke-width="0.5"/><path d="M2.4 5.4h9v9.6H2.4z" fill="#d2d2d2"/><path d="M0 2.6h4.6" stroke="#1f86dd" stroke-width="1.5"/><path d="M4.2 0.4L8 2.6L4.2 4.8z" fill="#1f86dd"/><g transform="rotate(-35 12 13)"><rect x="7.6" y="11.2" width="5" height="3.4" rx="1.7" fill="none" stroke="#222" stroke-width="1"/><rect x="11.2" y="11.2" width="5" height="3.4" rx="1.7" fill="none" stroke="#222" stroke-width="1"/></g></g><g transform="translate(362.50 43.60)"><path d="M0.6 6L3.4 3.4h10.4l0 10.4l-2.6 2.8H0.6z" fill="#dcdcdc" stroke="#999" stroke-width="0.5"/><path d="M0.6 6h10.6v10.6H0.6z" fill="#d4d4d4"/><path d="M5.9 6v10.6M0.6 11.2h10.6" stroke="#f4f4f4" stroke-width="0.5"/><path d="M0.6 6L3.4 3.4h5L5.9 6v5.2H0.6z" fill="#4a9be0"/><path d="M0.6 6L3.4 3.4h5L5.9 6z" fill="#8cc6f2"/><path d="M5.9 6L8.4 3.4v5.2L5.9 11.2z" fill="#2f7fc6"/><path d="M9 3.4h3.2V0.2h2.2v3.2h3.2v2.2h-3.2v3.2h-2.2V5.6H9z" fill="#21a038"/></g><g transform="translate(385.00 44.20)"><rect x="0.4" y="9.8" width="7.4" height="5.2" fill="#f6f6f6" stroke="#888" stroke-width="0.7"/><rect x="9.4" y="0.4" width="7.6" height="5.6" fill="#4a9be0"/><path d="M8.6 0.2v15" stroke="#e58b8b" stroke-width="0.8"/></g><g transform="translate(408.10 43.00)"><rect x="0.4" y="0.4" width="3" height="3" fill="#4a9be0"/><path d="M1.8 3.4v10.4M1.8 6h2.8M1.8 9.4h2.8M1.8 12.8h2.8" stroke="#777" stroke-width="0.6" fill="none"/><rect x="2.6" y="2.4" width="3" height="3" fill="#fff" stroke="#777" stroke-width="0.5"/><rect x="6.2" y="4.6" width="10.6" height="12" fill="#eee" stroke="#555" stroke-width="0.7"/><rect x="6.2" y="4.6" width="10.6" height="2.2" fill="#444"/><path d="M6.2 9.4h10.6M6.2 11.8h10.6M6.2 14.2h10.6M9.8 6.8v9.8M13.4 6.8v9.8" stroke="#777" stroke-width="0.5"/></g><g transform="translate(445.00 43.40)"><path d="M0.6 5.6L3 3.2h8v10.6H0.6z" fill="#ececec" stroke="#dedede" stroke-width="0.5"/><circle cx="13.4" cy="4.4" r="4.2" fill="#a8d0f2"/><path d="M13.4 1.8l-1.8 2.2h1.1v2.4h1.4V4h1.1z" fill="#fff"/><path d="M10.6 11.6h5.6M13.4 9v5.4" stroke="#dcdcdc" stroke-width="0.7"/></g><g transform="translate(468.00 43.40)"><rect x="0.6" y="3" width="11.4" height="10.8" fill="#eee" stroke="#dcdcdc" stroke-width="0.5"/><path d="M0.6 6h11.4M0.6 8.6h11.4M0.6 11.2h11.4M4.4 3v10.8M8.2 3v10.8" stroke="#dcdcdc" stroke-width="0.5"/><circle cx="13.4" cy="4.4" r="4.2" fill="#a8d0f2"/><path d="M13.4 1.8l-1.8 2.2h1.1v2.4h1.4V4h1.1z" fill="#fff"/><path d="M10.6 11.6h5.6M13.4 9v5.4" stroke="#dcdcdc" stroke-width="0.7"/></g><g transform="translate(506.90 43.00)"><path d="M0.4 6L4.6 1.2h4.4v10.6L5 16.6H0.4z" fill="#e2e2e2" stroke="#777" stroke-width="0.6"/><path d="M5 6l4-4.8v10.6L5 16.6z" fill="#3bb273"/><path d="M0.4 6H5v10.6" fill="none" stroke="#777" stroke-width="0.5"/><path d="M11.6 6.4l4.8-5.2v10.4l-4.8 5.2z" fill="#e8935a"/></g><g transform="translate(538.75 47.40)"><rect x="0" y="5.4" width="15" height="3.6" fill="#f2a100"/><path d="M0.3 0.4v4M14.7 0.4v4M0.3 2.4h14.4" stroke="#444" stroke-width="0.6"/><path d="M0.6 2.4l1.8-1v2zM14.4 2.4l-1.8-1v2z" fill="#444"/><path d="M2 5.4v1.4M4 5.4v1M6 5.4v1.4M8 5.4v1M10 5.4v1.4M12 5.4v1" stroke="#b87800" stroke-width="0.4"/></g><g transform="translate(569.40 43.60)"><path d="M0.2 0.8h12.2v3.6H9.4v10.8c0 1.2-6.2 1.2-6.2 0V4.4H0.2z" fill="#cfdfee"/><path d="M8.2 12h2.8V9.2h1.8V12h2.8v1.8h-2.8v2.8H11v-2.8H8.2z" fill="#a9dbb4"/></g><g transform="translate(591.90 43.60)"><rect x="0" y="0" width="15" height="15.6" fill="#5fb0ee"/><rect x="0.5" y="0.5" width="14" height="14.6" fill="#7cc3f6"/><path d="M0.5 15.1V10l3.6-4l3.2 3.6l2.4-2.2l4.8 4.2v3.5z" fill="#2c84cc"/><circle cx="10.6" cy="4" r="1.7" fill="#fdf1a8"/></g><g transform="translate(621.30 44.40)"><path d="M0.4 5.4L3.6 1h9l4 4.6l-9.6 1.4z" fill="#3bb273"/><path d="M0.4 5.4l3 1.6l3.6 0l-0.4 7.4l-4-2.2z" fill="#f2f2f2" stroke="#555" stroke-width="0.5"/><path d="M0.6 8.2l5.8 2.4M1.4 10.6l5 2.2" stroke="#777" stroke-width="0.5"/><path d="M7.8 1.2l2.6 5.2" stroke="#2a8f58" stroke-width="0.5"/><path d="M16.4 7.4l-5 5" stroke="#555" stroke-width="0.9"/><path d="M11.8 11.8c-1.4 0.2-2.4 1.4-3.8 3c2 0.4 4-0.4 4.6-2.2z" fill="#a4601e"/></g></svg>

<div class="a" style="left:0.00px;top:0.00px;width:4.00px;height:20.00px;background:#e3e7ee;"></div>
<div class="a" style="left:0.00px;top:20.00px;width:4.00px;height:27.00px;background:#fdfdfd;"></div>
<div class="a" style="left:0.00px;top:47.00px;width:4.00px;height:526.00px;background:#f2f2f2;"></div>
<svg class="a" style="left:0.00px;top:47.00px;" width="4" height="8" viewBox="0 0 4 8"><path d="M0 5.4L1.6 2.6L3.4 5.4z" fill="#444"/></svg>
<div class="a" style="left:0;top:56.5px;width:2.6px;height:107px;background:#505050;border-radius:0 1.4px 1.4px 0"></div>
<svg class="a" style="left:0.00px;top:540.00px;" width="4" height="6" viewBox="0 0 4 6"><path d="M0 1.6L1.6 4.4L3.4 1.6z" fill="#444"/></svg>
<div class="a" style="left:0.00px;top:573.00px;width:4.00px;height:43.00px;background:#000;"></div>
<div class="a" style="left:4.00px;top:611.20px;width:1020.00px;height:4.80px;background:#e9e9e9;"></div>
<div class="a" style="left:4.00px;top:610.60px;width:1020.00px;height:0.90px;background:#cfcfcf;"></div>
<div class="a" style="left:22.80px;top:614.60px;width:2.60px;height:1.40px;background:#c0271f;border-radius:1px 1px 0 0"></div>
<div class="a" style="left:530.80px;top:614.80px;width:2.60px;height:1.20px;background:#555;"></div>
<div id="comments" class="a" style="left:5.5px;top:596.5px;width:160px;height:12.5px;background:rgba(243,243,243,0.97)"></div>
<span class="t" id="t108" style="left:21.20px;top:600.40px;font-size:6.60px;color:#3c3c3c;font-weight:500;transform:scaleX(0.6673);">コメント</span>
<svg class="a" style="left:154.00px;top:600.20px;" width="6" height="6" viewBox="0 0 6 6"><path d="M3 0.6v4.8M0.6 3h4.8" stroke="#555" stroke-width="0.9"/></svg>
<div id="navbar" class="a" style="left:451.6px;top:595.8px;width:126.2px;height:11.6px;background:rgba(245,245,245,0.95)"></div>
<svg class="a" style="left:440.00px;top:590.00px;" width="150" height="22" viewBox="440 590 150 22"><ellipse cx="456.6" cy="602.0" rx="4" ry="1.8" fill="none" stroke="#666" stroke-width="0.7"/><path d="M456.6 597.4v8.4" stroke="#3b97e3" stroke-width="0.8"/><rect x="471.4" y="600.0" width="7.6" height="5.4" fill="#3b97e3"/><path d="M471.4 599.0h7.6v1.4h-7.6z" fill="#555"/><path d="M472.4 599.0l1.2-1.6h3.4l1.2 1.6" fill="none" stroke="#555" stroke-width="0.7"/><path d="M486.4 605.8c-0.6-1.6-1.6-2.4-1-3c0.8-0.4 1.4 0.6 1.8 1.2v-3.6c0-0.7 1-0.7 1 0v-0.6c0-0.7 1-0.7 1 0v0.4c0-0.7 1-0.7 1 0v0.6c0-0.6 1-0.6 1 0v3.4c0 1.4-0.6 2.4-1 3z" fill="#fafafa" stroke="#777" stroke-width="0.6"/><circle cx="501.4" cy="601.6" r="2.5" fill="#f2f2f2" stroke="#666" stroke-width="0.8"/><path d="M503.2 603.4l2 2.2" stroke="#8a5a2a" stroke-width="1"/><path d="M505.6 598.0v3.4M504.6 598.8l1-1.2l1 1.2" stroke="#555" stroke-width="0.6" fill="none"/><rect x="512.4" y="597.6" width="8" height="8" fill="none" stroke="#888" stroke-width="0.5" stroke-dasharray="1 0.6"/><circle cx="516" cy="601.2" r="2.9" fill="#f0f0f0" stroke="#666" stroke-width="0.8"/><path d="M518.2 603.4l2.2 2.2" stroke="#8a5a2a" stroke-width="1"/><rect x="530.4" y="598.2" width="8" height="5.6" fill="#8a8a8a" stroke="#555" stroke-width="0.6"/><path d="M532.4 605.0h4" stroke="#555" stroke-width="0.8"/><rect x="546.6" y="598.0" width="7" height="7" fill="#f2f2f2" stroke="#555" stroke-width="0.6"/><path d="M548.9 598.0v7M551.2 598.0v7M546.6 600.3h7M546.6 602.6h7" stroke="#555" stroke-width="0.5"/><rect x="563" y="598.2" width="8" height="6.6" fill="#9a9a9a" stroke="#555" stroke-width="0.6"/><path d="M567 598.2v6.6M563 601.6h8" stroke="#555" stroke-width="0.5"/><path d="M464.5 601.1h2.4l-1.2 1.5z" fill="#555"/><path d="M523.8 601.1h2.4l-1.2 1.5z" fill="#555"/><path d="M540.4 601.1h2.4l-1.2 1.5z" fill="#555"/><path d="M556.8 601.1h2.4l-1.2 1.5z" fill="#555"/><path d="M573.7 601.1h2.4l-1.2 1.5z" fill="#555"/></svg>
<svg class="a" style="left:960.00px;top:74.00px;" width="64" height="70" viewBox="960 74 64 70"><defs><filter id="fVC" x="-30%" y="-30%" width="160%" height="160%"><feGaussianBlur stdDeviation="1.6"/></filter><linearGradient id="gVF" x1="0" y1="0" x2="0.3" y2="1"><stop offset="0" stop-color="#f4f4f4"/><stop offset="1" stop-color="#dedede"/></linearGradient></defs><path d="M979 126L1004 122L1010 128L985 134z" fill="#b8b8b8" opacity="0.55" filter="url(#fVC)"/><path d="M976 93.7L997.5 89.5L1008.3 102.3L982.6 108z" fill="#e9e9e9"/><path d="M982.6 108L1008.3 102.3L1006.4 120.7L983.2 127.3z" fill="url(#gVF)"/><path d="M976 93.7L982.6 108L983.2 127.3L976.6 113z" fill="#d3d3d3"/><path d="M976 93.7L997.5 89.5L1008.3 102.3L1006.4 120.7L983.2 127.3L976.6 113zM976 93.7L982.6 108L1008.3 102.3M982.6 108L983.2 127.3" fill="none" stroke="#8a8a8a" stroke-width="0.6" stroke-dasharray="1.8 1.1"/><path d="M973.2 88.7L976 112.4" stroke="#6fd46f" stroke-width="1"/><path d="M976 112.4L983.7 132.3" stroke="#7d7df0" stroke-width="1"/><text x="0" y="0" font-size="7.6" fill="#909090" font-family="'Liberation Sans','Noto Sans CJK JP',sans-serif" transform="matrix(0.95 -0.2 0.62 0.72 987.2 101)">上</text><text x="0" y="0" font-size="12.4" fill="#7c7c7c" font-family="'Liberation Sans','Noto Sans CJK JP',sans-serif" transform="matrix(0.95 -0.22 -0.06 0.92 987.6 121.2)">前</text><text x="971" y="88" font-size="6.2" fill="#6fd46f" font-family="'Liberation Sans',sans-serif">Y</text><text x="982.8" y="137.6" font-size="6.4" fill="#7d7df0" font-family="'Liberation Sans',sans-serif">Z</text><path d="M1019.6 75.6L1024 78.4" stroke="#444" stroke-width="1"/></svg>
</div></body></html>
